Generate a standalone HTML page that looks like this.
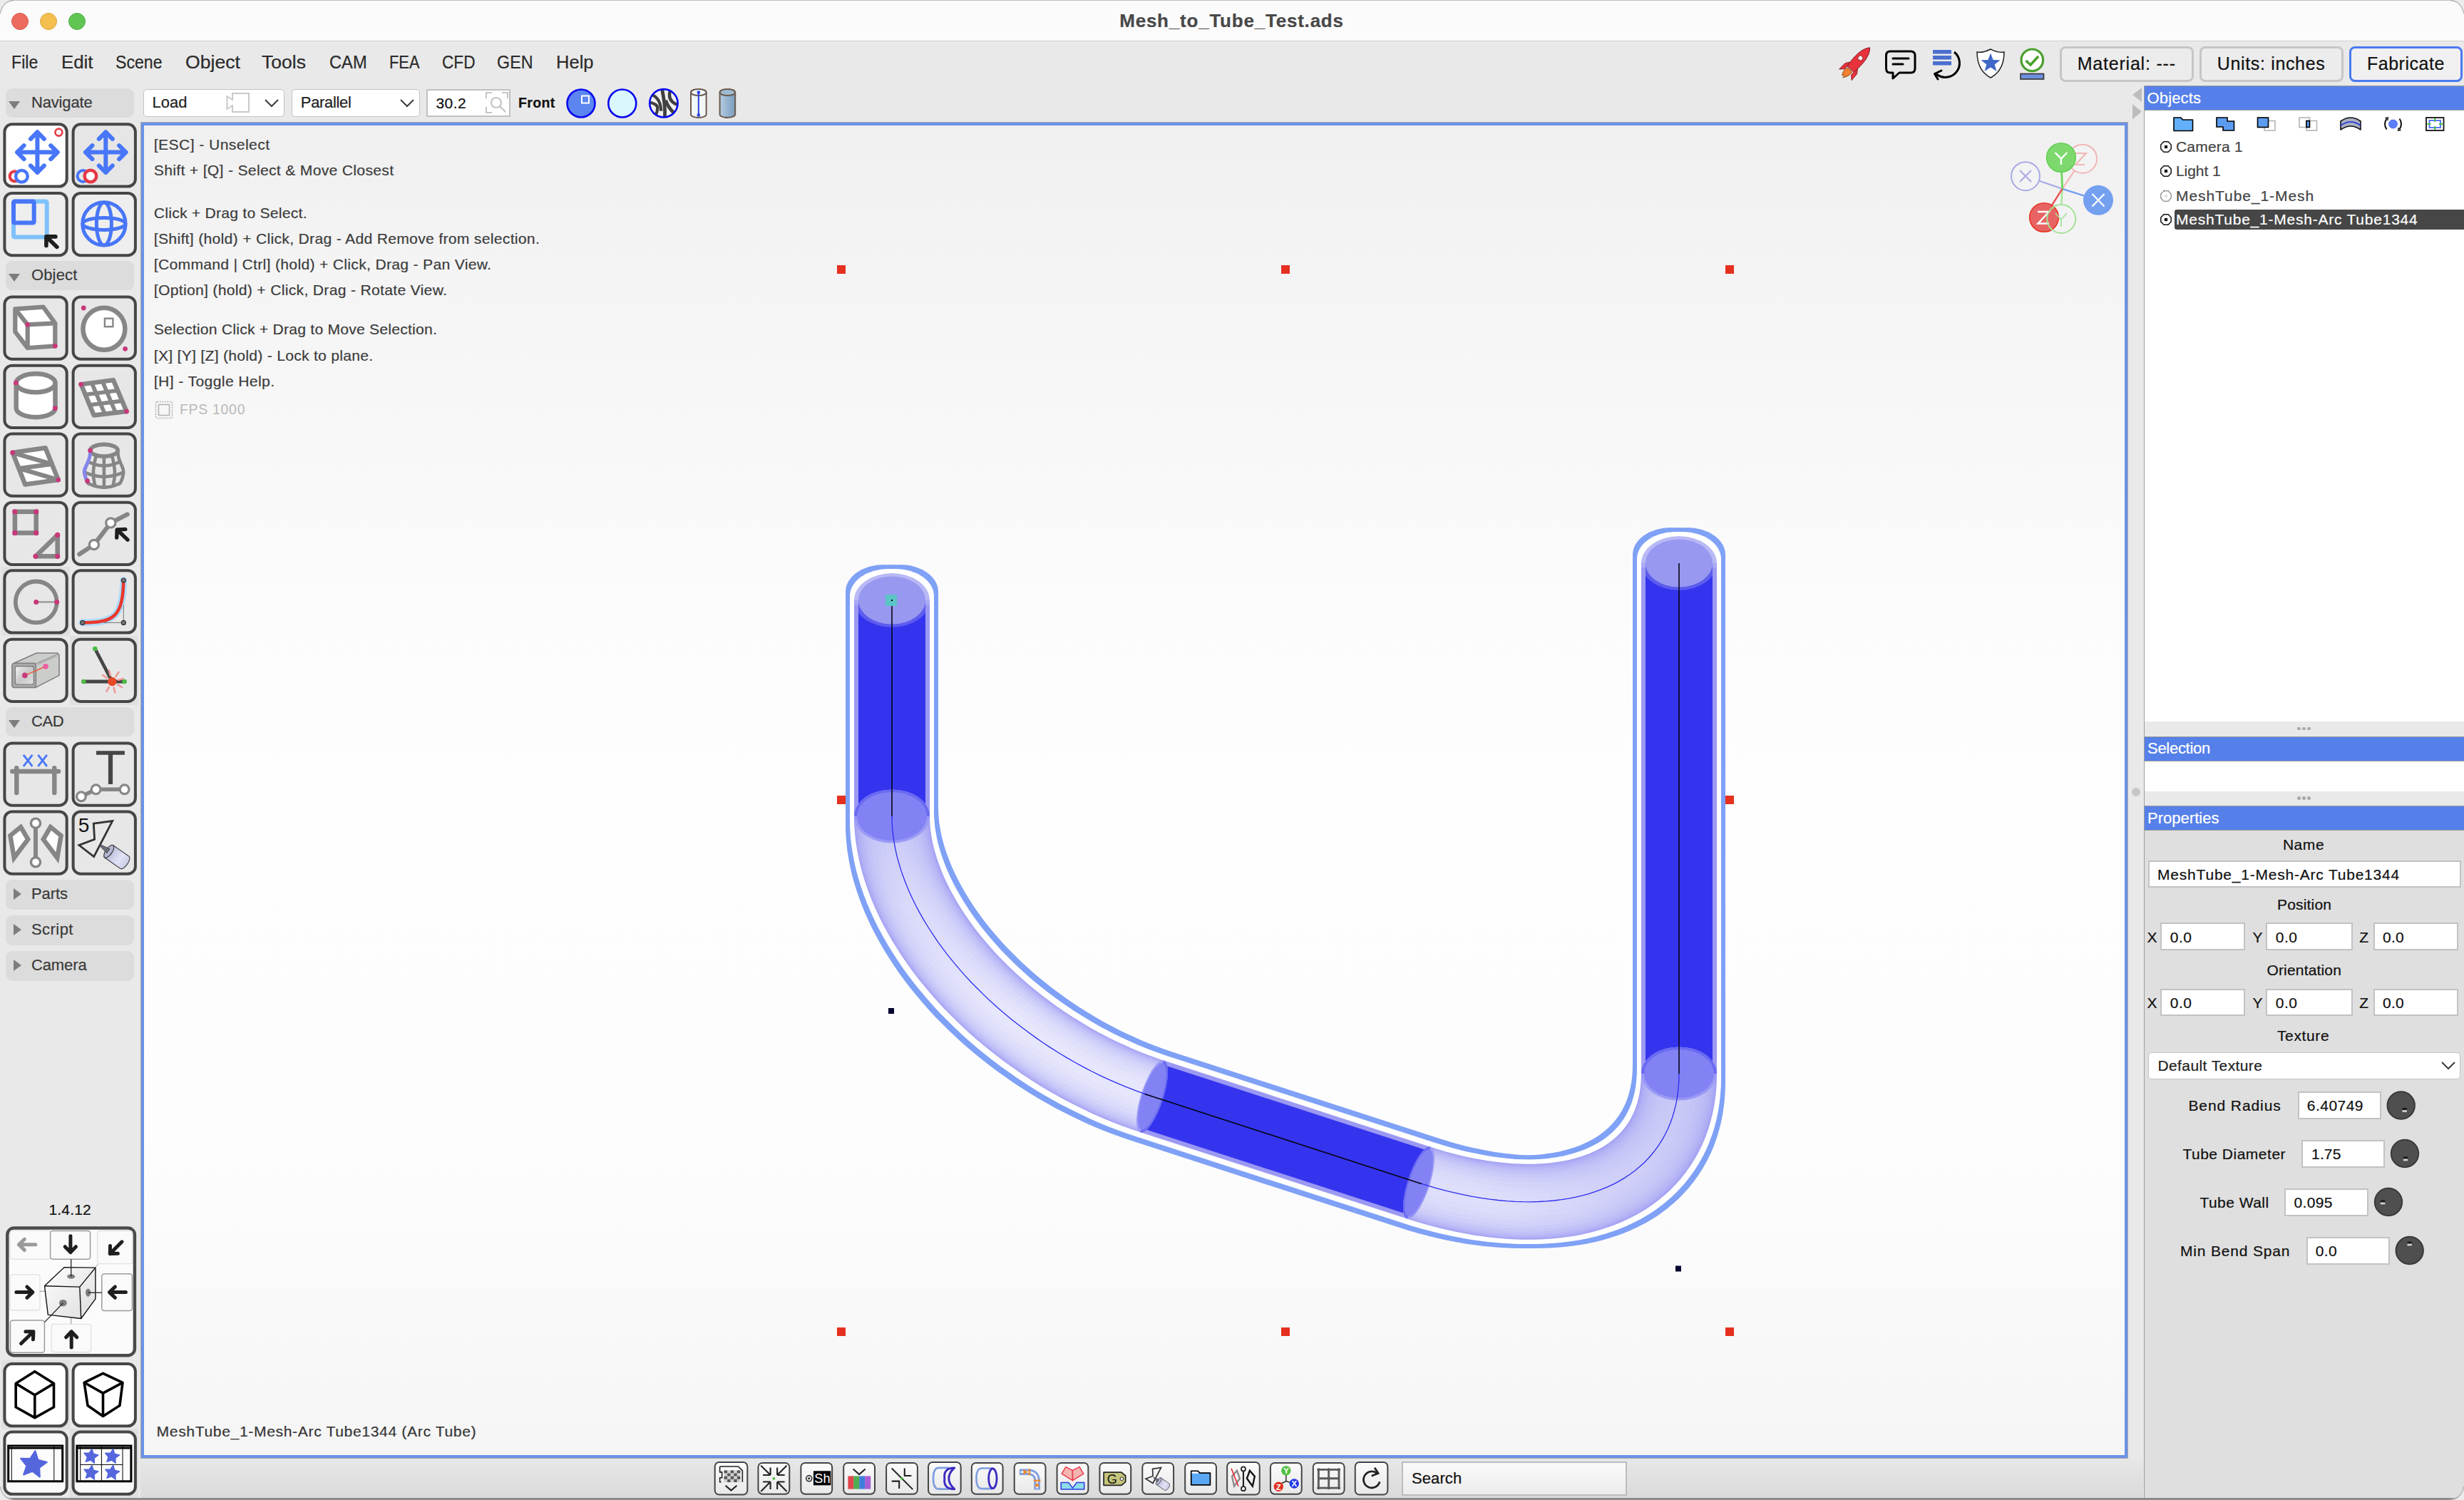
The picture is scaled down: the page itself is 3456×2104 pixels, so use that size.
<!DOCTYPE html>
<html><head><meta charset="utf-8"><title>Mesh_to_Tube_Test.ads</title>
<style>

html,body{margin:0;padding:0;}
body{width:3456px;height:2104px;position:relative;overflow:hidden;background:#e9e9e9;
 font-family:"Liberation Sans",sans-serif;color:#000;}
.abs{position:absolute;}
div,span,svg{position:absolute;box-sizing:border-box;}
.t{white-space:nowrap;line-height:1;-webkit-text-stroke:0.22px currentColor;}
#titlebar{left:0;top:0;width:3456px;height:58px;background:#fbfbfb;border-bottom:1.5px solid #cfcfcf;}
#title{left:0;width:3456px;top:15px;text-align:center;font-weight:bold;font-size:26px;color:#484848;}
.tl{width:24px;height:24px;border-radius:12px;top:17.5px;}
.menu{top:74px;font-size:25px;color:#2b2b2b;transform-origin:0 0;}
.hdr{left:8px;width:180px;height:41px;background:#dcdcdc;border-radius:9px;}
.hdr .t{left:36px;top:9px;font-size:22px;color:#3a3a3a;}
.tb{width:91px;height:91px;border:4px solid #464646;border-radius:13px;background:#e7e7e7;}
.tb svg{left:-4px;top:-4px;width:91px;height:91px;overflow:visible;}
.field{background:#fff;border:1.5px solid #c2c2c2;}
.combo{background:#fff;border:1.5px solid #c4c4c4;border-radius:5px;}
.phdr{left:3008px;width:448px;height:35px;background:#5680e9;border-top:1.5px solid #9a9a9a;border-bottom:1.5px solid #9a9a9a;}
.phdr .t{left:5px;top:5px;font-size:22px;color:#fff;}
.lbl{font-size:21px;color:#111;}
.tree{font-size:21px;color:#444;}
.bb{width:47px;height:47px;border:2px solid #4a4a4a;border-radius:7px;background:#f6f6f6;top:2050px;}
.bb svg{left:-2.5px;top:-2.5px;width:48px;height:48px;overflow:visible;}

</style></head>
<body>
<div id="titlebar"></div>
<div style="left:0;top:0;width:3456px;height:1px;background:#bdbdbd"></div>
<span class="t" style="left:1570.2px;top:15.5px;font-size:26px;color:#484848;letter-spacing:0.785px;font-weight:bold;">Mesh_to_Tube_Test.ads</span>
<div class="tl" style="left:16px;background:#ec6a5e;border:1px solid #d9574b"></div>
<div class="tl" style="left:56px;background:#f4bf4f;border:1px solid #dca83d"></div>
<div class="tl" style="left:96px;background:#61c554;border:1px solid #4fb043"></div>
<span class="t" style="left:15.8px;top:74.8px;font-size:25px;color:#2b2b2b;transform:scaleX(0.9260);transform-origin:0 0;">File</span>
<span class="t" style="left:86.2px;top:74.8px;font-size:25px;color:#2b2b2b;transform:scaleX(1.0330);transform-origin:0 0;">Edit</span>
<span class="t" style="left:161.7px;top:74.8px;font-size:25px;color:#2b2b2b;transform:scaleX(0.9241);transform-origin:0 0;">Scene</span>
<span class="t" style="left:259.8px;top:74.8px;font-size:25px;color:#2b2b2b;transform:scaleX(1.0657);transform-origin:0 0;">Object</span>
<span class="t" style="left:367.2px;top:74.8px;font-size:25px;color:#2b2b2b;transform:scaleX(1.0624);transform-origin:0 0;">Tools</span>
<span class="t" style="left:461.9px;top:74.8px;font-size:25px;color:#2b2b2b;transform:scaleX(0.9468);transform-origin:0 0;">CAM</span>
<span class="t" style="left:546.2px;top:74.8px;font-size:25px;color:#2b2b2b;transform:scaleX(0.8741);transform-origin:0 0;">FEA</span>
<span class="t" style="left:619.8px;top:74.8px;font-size:25px;color:#2b2b2b;transform:scaleX(0.9050);transform-origin:0 0;">CFD</span>
<span class="t" style="left:697.2px;top:74.8px;font-size:25px;color:#2b2b2b;transform:scaleX(0.9322);transform-origin:0 0;">GEN</span>
<span class="t" style="left:780.2px;top:74.8px;font-size:25px;color:#2b2b2b;transform:scaleX(1.0211);transform-origin:0 0;">Help</span>
<div class="combo" style="left:201px;top:124.5px;width:198px;height:39px"></div>
<span class="t" style="left:213.6px;top:133.3px;font-size:22px;color:#222;letter-spacing:-0.054px;">Load</span>
<svg style="left:316px;top:128px;width:36px;height:32px" viewBox="0 0 36 32"><path d="M10 3H33V29H10V20L2.5 25V7L10 12Z" fill="none" stroke="#c9c9c9" stroke-width="2"/></svg>
<svg style="left:369px;top:137px;width:24px;height:16px" viewBox="0 0 24 16"><path d="M3 3L12 12L21 3" fill="none" stroke="#3c3c3c" stroke-width="2"/></svg>
<div class="combo" style="left:409px;top:124.5px;width:180px;height:39px"></div>
<span class="t" style="left:421.8px;top:133.3px;font-size:22px;color:#222;letter-spacing:-0.343px;">Parallel</span>
<svg style="left:559px;top:137px;width:24px;height:16px" viewBox="0 0 24 16"><path d="M3 3L12 12L21 3" fill="none" stroke="#3c3c3c" stroke-width="2"/></svg>
<div class="field" style="left:598px;top:124.5px;width:118px;height:39px;border-width:2px;border-color:#c0c0c0"></div>
<span class="t" style="left:611.4px;top:133.8px;font-size:21px;color:#111;letter-spacing:0.498px;">30.2</span>
<svg style="left:679px;top:127px;width:36px;height:34px" viewBox="0 0 36 34"><path d="M3 11V3H11M25 3H33V11M3 23V31H11" fill="none" stroke="#c4c4c4" stroke-width="2"/><circle cx="17" cy="17" r="7" fill="none" stroke="#c4c4c4" stroke-width="2.2"/><path d="M22 22L30 30" stroke="#c4c4c4" stroke-width="2.4"/></svg>
<span class="t" style="left:726.9px;top:135.2px;font-size:19.5px;color:#111;letter-spacing:0.371px;font-weight:bold;">Front</span>
<svg style="left:790px;top:120px;width:250px;height:50px" viewBox="790 120 250 50"><defs><clipPath id="cpz"><circle cx="930.9" cy="144.8" r="19.5"/></clipPath><linearGradient id="gcy" x1="0" x2="1" y1="0" y2="0"><stop offset="0" stop-color="#b8cde0"/><stop offset="0.6" stop-color="#8fb0cd"/><stop offset="1" stop-color="#7c9cbc"/></linearGradient></defs><circle cx="815" cy="145" r="19.5" fill="#5c85f0" stroke="#0808ee" stroke-width="2.6"/><rect x="816" y="134.5" width="10" height="10" fill="#5c85f0" stroke="#fff" stroke-width="2"/><circle cx="872.8" cy="145" r="19.5" fill="#daf7fd" stroke="#0808ee" stroke-width="2.6"/><circle cx="930.9" cy="144.8" r="19.7" fill="#f0f0f0"/><g clip-path="url(#cpz)" fill="none" stroke="#404040"><path d="M928.9 126.1 C930.3 136.3 933.6 147.2 932.4 163.9" stroke-width="4.8"/><path d="M933.6 140.7 C936.4 148.8 939.7 152.9 944.5 157.8" stroke-width="4.8"/><path d="M915.3 133.4 C923.4 137.1 926.7 144.0 927.3 155.7" stroke-width="4.2"/><path d="M912.1 143.8 C919.8 146.0 923.0 148.0 922.2 153.7 C921.8 156.6 921.0 159.0 919.4 161.4" stroke-width="4.2"/><path d="M939.7 127.7 C937.6 136.3 940.1 143.2 949.8 146.6" stroke-width="4.4"/></g><circle cx="930.9" cy="144.8" r="19.7" fill="none" stroke="#0808ee" stroke-width="2.6"/><path d="M969 129.500V160.500A10.8 4.5 0 0 0 990.6 160.500V129.500" fill="#f1f8f5" stroke="#6b5a4e" stroke-width="2"/><ellipse cx="979.8" cy="129.500" rx="10.8" ry="4.6" fill="#f1f8f5" stroke="#6b5a4e" stroke-width="2"/><path d="M979.8 129.500V161.500" stroke="#2a3fe0" stroke-width="2"/><rect x="977.8" y="127.500" width="4" height="4" fill="#2a3fe0"/><rect x="977.8" y="159.500" width="4" height="4" fill="#2a3fe0"/><path d="M1009.6 129.500V160.500A10.8 4.5 0 0 0 1031.2 160.500V129.500" fill="url(#gcy)" stroke="#6b5a4e" stroke-width="2"/><ellipse cx="1020.4" cy="129.500" rx="10.8" ry="4.6" fill="#9fbbd4" stroke="#6b5a4e" stroke-width="2"/></svg>
<svg style="left:2570px;top:60px;width:310px;height:60px" viewBox="2570 60 310 60"><g transform="translate(2604 87.500) rotate(42) scale(0.9)"><path d="M-7 20L-13 26L-12.500 13L-7 5Z" fill="#e8323c" stroke="#7a1a20" stroke-width="0.9"/><path d="M7 20L13 26L12.500 13L7 5Z" fill="#e8323c" stroke="#7a1a20" stroke-width="0.9"/><path d="M0 -31C8.500 -22 9.500 -6 7 14H-7C-9.500 -6 -8.500 -22 0 -31Z" fill="#e8323c" stroke="#7a1a20" stroke-width="1"/><circle cx="0" cy="-9" r="3.800" fill="#f3f3f3" stroke="#7a1a20" stroke-width="0.9"/><path d="M-4.500 15.500C-8 21 -5.500 25 -3.500 30C-1.500 27 -0.500 27 0 32C3.500 27 6.500 21 4.500 15.500Z" fill="#f08030" stroke="#8a3a10" stroke-width="0.9"/></g><path d="M2651 72H2680Q2686 72 2686 78V96Q2686 102 2680 102H2664L2655 110V102H2651Q2645.500 102 2645.500 96V78Q2645.500 72 2651 72Z" fill="none" stroke="#000" stroke-width="3" stroke-linejoin="round"/><path d="M2655 82H2677M2655 90H2669" stroke="#000" stroke-width="3" stroke-linecap="round"/><rect x="2711" y="70" width="26" height="5.5" fill="#4a6fd0"/><rect x="2711" y="78" width="26" height="5.5" fill="#4a6fd0"/><rect x="2711" y="86" width="26" height="5.5" fill="#4a6fd0"/><path d="M2741 73A18 18 0 1 1 2716 104" fill="none" stroke="#000" stroke-width="3"/><path d="M2723 99L2713.500 103.500L2718 111" fill="none" stroke="#000" stroke-width="3" stroke-linecap="round" stroke-linejoin="round"/><path d="M2792 69C2784 73 2778 74 2773 73C2773 90 2779 102 2792 109C2805 102 2811 90 2811 73C2806 74 2800 73 2792 69Z" fill="#fff" stroke="#222" stroke-width="1.5"/><path d="M2792 74.500L2795.600 84L2805.500 84.300L2797.700 90.500L2800.500 100L2792 94.500L2783.500 100L2786.300 90.500L2778.500 84.300L2788.400 84Z" fill="#4068c8"/><circle cx="2850.3" cy="84.3" r="15.3" fill="#fff" stroke="#4aa02c" stroke-width="3.2"/><path d="M2841.500 85L2848 91L2859 79" fill="none" stroke="#4aa02c" stroke-width="3.6"/><rect x="2834" y="103.500" width="32.500" height="7.500" fill="#6d8fdc" stroke="#333" stroke-width="1.6"/></svg>
<div style="left:2889px;top:65px;width:188px;height:50px;border:3px solid #c6c6c6;border-radius:8px;background:#ececec"></div>
<span class="t" style="left:2913.7px;top:77.0px;font-size:25px;color:#111;letter-spacing:0.794px;">Material: ---</span>
<div style="left:3085px;top:65px;width:202px;height:50px;border:3px solid #c6c6c6;border-radius:8px;background:#ececec"></div>
<span class="t" style="left:3109.7px;top:77.0px;font-size:25px;color:#111;letter-spacing:0.661px;">Units: inches</span>
<div style="left:3295px;top:65px;width:159px;height:50px;border:3px solid #4a7af0;border-radius:8px;background:#f0f0f0"></div>
<span class="t" style="left:3319.9px;top:77.0px;font-size:25px;color:#111;letter-spacing:0.533px;">Fabricate</span>
<div style="left:2px;top:795px;width:96px;height:97px;background:#e0e0e0"></div>
<div style="left:98px;top:892px;width:96px;height:97px;background:#e0e0e0"></div>
<div class="hdr" style="top:124.0px;height:41px"><svg style="left:3px;top:16px;width:18px;height:14px" viewBox="0 0 18 14"><path d="M1 2H17L9 13Z" fill="#7d7d7d"/></svg></div><span class="t" style="left:43.9px;top:133.3px;font-size:22px;color:#3a3a3a;letter-spacing:-0.138px;">Navigate</span>
<svg style="left:4px;top:172px;width:94px;height:94px" viewBox="0 0 94 94"><g transform="translate(0.40 0.30)"><rect x="2" y="2" width="87.3" height="87.3" rx="10.5" fill="#ffffff" stroke="#464646" stroke-width="4"/><path d="M48.0 13.0V69.6M19.7 41.3H76.3M38.5 22.5L48.0 13.0L57.5 22.5M38.5 60.1L48.0 69.6L57.5 60.1M29.2 31.8L19.7 41.3L29.2 50.8M66.8 31.8L76.3 41.3L66.8 50.8" fill="none" stroke="#4876f8" stroke-width="6" stroke-linecap="round" stroke-linejoin="round"/><circle cx="78" cy="13.3" r="5" fill="#fff" stroke="#e63946" stroke-width="2.6"/><circle cx="16.3" cy="75" r="7" fill="#fff" stroke="#e63946" stroke-width="4.2"/><circle cx="26" cy="75" r="8.3" fill="#fff" stroke="#4876f8" stroke-width="4.5"/></g></svg>
<svg style="left:100px;top:172px;width:94px;height:94px" viewBox="0 0 94 94"><g transform="translate(0.60 0.30)"><rect x="2" y="2" width="87.3" height="87.3" rx="10.5" fill="#e6e6e6" stroke="#464646" stroke-width="4"/><path d="M47.7 13.0V69.6M19.4 41.3H76.0M38.2 22.5L47.7 13.0L57.2 22.5M38.2 60.1L47.7 69.6L57.2 60.1M28.9 31.8L19.4 41.3L28.9 50.8M66.5 31.8L76.0 41.3L66.5 50.8" fill="none" stroke="#4876f8" stroke-width="6" stroke-linecap="round" stroke-linejoin="round"/><circle cx="16" cy="74.7" r="8" fill="#e6e6e6" stroke="#4876f8" stroke-width="4"/><circle cx="26.3" cy="74.7" r="8.3" fill="#fff" stroke="#e63946" stroke-width="4.5"/></g></svg>
<svg style="left:4px;top:268px;width:94px;height:94px" viewBox="0 0 94 94"><g transform="translate(0.40 0.90)"><rect x="2" y="2" width="87.3" height="87.3" rx="10.5" fill="#eeeeee" stroke="#464646" stroke-width="4"/><rect x="14.6" y="13.7" width="46.7" height="50" rx="1.5" fill="none" stroke="#7fc1fb" stroke-width="6"/><rect x="14.6" y="13.7" width="28.7" height="30" rx="1.5" fill="none" stroke="#4876f8" stroke-width="6"/><path d="M75.500 77.500L61 63.500M73.500 63H60.500V75.500" fill="none" stroke="#1e1e1e" stroke-width="5.6" stroke-linecap="round" stroke-linejoin="round"/></g></svg>
<svg style="left:100px;top:268px;width:94px;height:94px" viewBox="0 0 94 94"><g transform="translate(0.60 0.90)"><rect x="2" y="2" width="87.3" height="87.3" rx="10.5" fill="#eeeeee" stroke="#464646" stroke-width="4"/><g fill="none" stroke="#4876f8" stroke-width="5"><circle cx="45.3" cy="45" r="30.2"/><ellipse cx="45.3" cy="45" rx="10.5" ry="30"/><ellipse cx="45.3" cy="45" rx="30" ry="8.5"/></g></g></svg>
<div class="hdr" style="top:366.0px;height:41px"><svg style="left:3px;top:16px;width:18px;height:14px" viewBox="0 0 18 14"><path d="M1 2H17L9 13Z" fill="#7d7d7d"/></svg></div><span class="t" style="left:43.9px;top:375.3px;font-size:22px;color:#3a3a3a;letter-spacing:0.190px;">Object</span>
<svg style="left:4px;top:414px;width:94px;height:94px" viewBox="0 0 94 94"><g transform="translate(0.40 0.40)"><rect x="2" y="2" width="87.3" height="87.3" rx="10.5" fill="#e7e7e7" stroke="#464646" stroke-width="4"/><g fill="#fff" stroke="#868686" stroke-width="6.2" stroke-linejoin="round"><path d="M16.9 18.9L56.3 16.3L72.9 38.9L72.9 70.9L34.3 73.6L16.9 50.9Z"/><path d="M16.9 18.9L34.3 40.9L72.9 38.9" fill="none"/><path d="M34.3 40.9L34.3 73.6" fill="none"/></g><circle cx="34.3" cy="40.9" r="3.4" fill="#c8387a"/><circle cx="72.9" cy="70.9" r="3.4" fill="#c8387a"/></g></svg>
<svg style="left:100px;top:414px;width:94px;height:94px" viewBox="0 0 94 94"><g transform="translate(0.60 0.40)"><rect x="2" y="2" width="87.3" height="87.3" rx="10.5" fill="#e7e7e7" stroke="#464646" stroke-width="4"/><circle cx="45.3" cy="46.9" r="29.5" fill="#fff" stroke="#868686" stroke-width="6.5"/><rect x="46.3" y="32.3" width="11.5" height="11.5" fill="#fff" stroke="#868686" stroke-width="2.4"/><circle cx="16.6" cy="17.6" r="3.4" fill="#c8387a"/><circle cx="75.0" cy="74.9" r="3.4" fill="#c8387a"/></g></svg>
<svg style="left:4px;top:510px;width:94px;height:94px" viewBox="0 0 94 94"><g transform="translate(0.40 0.70)"><rect x="2" y="2" width="87.3" height="87.3" rx="10.5" fill="#e7e7e7" stroke="#464646" stroke-width="4"/><g fill="#fff" stroke="#868686" stroke-width="6.5"><path d="M18.3 26.6V61.5A27.4 13 0 0 0 73.100 61.500V26.600"/><ellipse cx="45.7" cy="26.6" rx="27.4" ry="13"/></g><circle cx="18.0" cy="26.2" r="3.4" fill="#c8387a"/><circle cx="72.9" cy="62.0" r="3.4" fill="#c8387a"/></g></svg>
<svg style="left:100px;top:510px;width:94px;height:94px" viewBox="0 0 94 94"><g transform="translate(0.60 0.70)"><rect x="2" y="2" width="87.3" height="87.3" rx="10.5" fill="#e7e7e7" stroke="#464646" stroke-width="4"/><path d="M13.1 28.4L58.3 22.4L76.9 66.4L31.1 71.7Z" fill="#fff" stroke="#868686" stroke-width="6.5" stroke-linejoin="round"/><path d="M28.1 26.4L46.4 70.0M19.1 42.8L64.5 37.1M43.2 24.4L61.6 68.2M25.1 57.3L70.7 51.7" fill="none" stroke="#868686" stroke-width="5.6"/><circle cx="13.1" cy="28.4" r="3.4" fill="#c8387a"/><circle cx="76.9" cy="66.4" r="3.4" fill="#c8387a"/></g></svg>
<svg style="left:4px;top:606px;width:94px;height:94px" viewBox="0 0 94 94"><g transform="translate(0.40 0.40)"><rect x="2" y="2" width="87.3" height="87.3" rx="10.5" fill="#e7e7e7" stroke="#464646" stroke-width="4"/><path d="M13.3 28.5L59.3 21.9L77.3 66.7L30.8 73.1Z" fill="#fff" stroke="#868686" stroke-width="6.5" stroke-linejoin="round"/><path d="M13.3 28.5L68.4 44.5L22.3 50.7L77.3 66.7" fill="none" stroke="#868686" stroke-width="6.2" stroke-linejoin="round"/><circle cx="13.3" cy="28.5" r="3.4" fill="#c8387a"/><circle cx="77.3" cy="66.7" r="3.4" fill="#c8387a"/></g></svg>
<svg style="left:100px;top:606px;width:94px;height:94px" viewBox="0 0 94 94"><g transform="translate(0.60 0.40)"><rect x="2" y="2" width="87.3" height="87.3" rx="10.5" fill="#e7e7e7" stroke="#464646" stroke-width="4"/><g fill="none" stroke="#868686" stroke-width="4.6" stroke-linecap="round"><path d="M26.0 26.3C26.7 42.9 15.3 48.3 18.7 60.3C20.0 65.6 20.7 69.6 24.0 72.3"/><path d="M64.7 26.3C64.0 42.9 75.3 48.3 72.0 60.3C70.7 65.6 70.0 69.6 66.7 72.3"/><ellipse cx="45.3" cy="25.3" rx="19.3" ry="8.3" stroke-width="5.6"/><path d="M23.3 71.6Q45.3 82.9 67.3 71.6"/><path d="M24.0 41.6Q45.3 52.3 66.7 41.6"/><path d="M18.4 56.3Q45.3 68.3 72.3 56.3"/><path d="M34.0 33.6Q27.3 54.9 32.7 74.9"/><path d="M45.3 34.9V77.3"/><path d="M56.7 33.6Q63.3 54.9 58.0 74.9"/></g><path d="M26.0 26.3C26.7 42.9 15.3 48.3 18.0 58.9C19.3 62.9 20.0 66.3 22.0 68.3" fill="none" stroke="#8686ee" stroke-width="4.8"/><circle cx="26.0" cy="25.6" r="3.4" fill="#c8387a"/><circle cx="22.0" cy="68.3" r="3.4" fill="#c8387a"/></g></svg>
<svg style="left:4px;top:702px;width:94px;height:94px" viewBox="0 0 94 94"><g transform="translate(0.40 0.70)"><rect x="2" y="2" width="87.3" height="87.3" rx="10.5" fill="#e7e7e7" stroke="#464646" stroke-width="4"/><path d="M16.5 15.1L46.3 15.1L46.3 44.7L16.5 44.7Z" fill="none" stroke="#868686" stroke-width="6.5"/><path d="M76.3 47.7L76.3 77.6L45.6 77.6Z" fill="none" stroke="#868686" stroke-width="6.5" stroke-linejoin="round"/><circle cx="16.5" cy="15.1" r="3.6" fill="#c8387a"/><circle cx="46.3" cy="15.1" r="3.6" fill="#c8387a"/><circle cx="46.3" cy="44.7" r="3.6" fill="#c8387a"/><circle cx="16.5" cy="44.7" r="3.6" fill="#c8387a"/><circle cx="76.3" cy="47.7" r="3.6" fill="#c8387a"/><circle cx="76.3" cy="77.6" r="3.6" fill="#c8387a"/><circle cx="45.6" cy="77.6" r="3.6" fill="#c8387a"/></g></svg>
<svg style="left:100px;top:702px;width:94px;height:94px" viewBox="0 0 94 94"><g transform="translate(0.60 0.70)"><rect x="2" y="2" width="87.3" height="87.3" rx="10.5" fill="#e7e7e7" stroke="#464646" stroke-width="4"/><path d="M10.7 74.7L31.3 61.3L54.7 30.7L78.0 18.9" fill="none" stroke="#868686" stroke-width="6.2" stroke-linecap="round" stroke-linejoin="round"/><circle cx="31.3" cy="61.3" r="6.6" fill="#fff" stroke="#868686" stroke-width="3.2"/><circle cx="54.7" cy="30.7" r="6.6" fill="#fff" stroke="#868686" stroke-width="3.2"/><path d="M78.4 54.4L63.6 40.3M75.3 39.7L63.6 40.3L63.1 51.3" fill="none" stroke="#1e1e1e" stroke-width="5.4" stroke-linecap="round" stroke-linejoin="round"/></g></svg>
<svg style="left:4px;top:798px;width:94px;height:94px" viewBox="0 0 94 94"><g transform="translate(0.40 0.30)"><rect x="2" y="2" width="87.3" height="87.3" rx="10.5" fill="#e7e7e7" stroke="#464646" stroke-width="4"/><circle cx="46.3" cy="46.1" r="28.9" fill="none" stroke="#868686" stroke-width="5.8"/><path d="M46.300 46.100H75.300" stroke="#9a9a9a" stroke-width="2.4"/><circle cx="46.3" cy="46.1" r="3.5" fill="#c8387a"/><circle cx="75.3" cy="46.1" r="3.5" fill="#c8387a"/></g></svg>
<svg style="left:100px;top:798px;width:94px;height:94px" viewBox="0 0 94 94"><g transform="translate(0.60 0.30)"><rect x="2" y="2" width="87.3" height="87.3" rx="10.5" fill="#e7e7e7" stroke="#464646" stroke-width="4"/><path d="M15.1 75.1C59.1 75.1 71.7 67.1 72.7 15.7" fill="none" stroke="#aedcfc" stroke-width="10" stroke-linecap="round"/><path d="M45.1 75.1L72.7 75.1L72.7 50.1" fill="none" stroke="#555" stroke-width="0.8"/><path d="M15.1 75.1C59.1 75.1 71.7 67.1 72.7 15.7" fill="none" stroke="#e8382d" stroke-width="4.6"/><circle cx="15.1" cy="75.1" r="3" fill="#777" stroke="#333" stroke-width="1.2"/><circle cx="72.7" cy="15.7" r="3" fill="#777" stroke="#333" stroke-width="1.2"/><circle cx="72.7" cy="75.1" r="3" fill="#777" stroke="#333" stroke-width="1.2"/></g></svg>
<svg style="left:4px;top:894px;width:94px;height:94px" viewBox="0 0 94 94"><g transform="translate(0.40 0.70)"><rect x="2" y="2" width="87.3" height="87.3" rx="10.5" fill="#e7e7e7" stroke="#464646" stroke-width="4"/><defs><linearGradient id="gsq" x1="0" y1="0" x2="1" y2="1"><stop offset="0" stop-color="#f2f2f2"/><stop offset="0.5" stop-color="#c8c8c8"/><stop offset="1" stop-color="#e2e2e2"/></linearGradient></defs><path d="M12.7 38.7L15.6 35.3L46.9 21.3L76.3 21.3L78.5 24.0L78.5 52.7L45.6 69.7L15.6 69.7L12.7 67.3Z" fill="#cbcdcb" stroke="#7f7f7f" stroke-width="1.6" stroke-linejoin="round"/><path d="M46.3 36.0L76.9 22.7" fill="none" stroke="#8a8a8a" stroke-width="1"/><path d="M48.3 37.3L75.6 25.3" fill="none" stroke="#8a8a8a" stroke-width="0.8"/><rect x="12.7" y="35.6" width="33.3" height="34.1" rx="3" fill="#a9a9a9" stroke="#7f7f7f" stroke-width="1.4"/><rect x="16.9" y="40.0" width="26.0" height="25.3" rx="2.5" fill="url(#gsq)" stroke="#777" stroke-width="1.2"/><path d="M30.5 52.7L59.6 40.0" stroke="#ee5a3a" stroke-width="1.5"/><circle cx="30.5" cy="52.7" r="3.8" fill="#c8387a"/><circle cx="59.6" cy="40.0" r="3.8" fill="#ee5fa0"/></g></svg>
<svg style="left:100px;top:894px;width:94px;height:94px" viewBox="0 0 94 94"><g transform="translate(0.60 0.70)"><rect x="2" y="2" width="87.3" height="87.3" rx="10.5" fill="#e7e7e7" stroke="#464646" stroke-width="4"/><path d="M32.7 15.3L56.7 61.3M16.7 61.3L74.0 61.3" fill="none" stroke="#464646" stroke-width="4.8" stroke-linecap="round"/><path d="M61.8 54.0L65.8 48.2M65.4 59.0L72.1 57.2M64.5 65.8L70.5 69.3M59.0 70.0L60.8 76.8M52.2 69.1L48.7 75.2M49.3 56.2L43.6 52.2M54.3 52.6L52.5 45.9" stroke="#f09a9a" stroke-width="2.6" stroke-linecap="round"/><circle cx="56.7" cy="61.3" r="6.2" fill="#e84a27"/><circle cx="32.7" cy="15.3" r="3.3" fill="#4cb944"/><circle cx="16.7" cy="61.3" r="3.3" fill="#4cb944"/><circle cx="74.0" cy="61.3" r="3.3" fill="#4cb944"/></g></svg>
<div class="hdr" style="top:992.0px;height:41px"><svg style="left:3px;top:16px;width:18px;height:14px" viewBox="0 0 18 14"><path d="M1 2H17L9 13Z" fill="#7d7d7d"/></svg></div><span class="t" style="left:43.9px;top:1001.3px;font-size:22px;color:#3a3a3a;letter-spacing:-0.310px;">CAD</span>
<svg style="left:4px;top:1040px;width:94px;height:94px" viewBox="0 0 94 94"><g transform="translate(0.40 0.40)"><rect x="2" y="2" width="87.3" height="87.3" rx="10.5" fill="#e7e7e7" stroke="#464646" stroke-width="4"/><path d="M12.8 41.6L77.7 41.6M18.9 36.8L18.9 71.7M71.9 36.8L71.9 71.7" fill="none" stroke="#868686" stroke-width="6.4" stroke-linecap="round"/><path d="M28.500 18.500L41 34.500M41 18.500L28.500 34.500M49 18.500L61.500 34.500M61.500 18.500L49 34.500" stroke="#4876f8" stroke-width="2.8" fill="none"/></g></svg>
<svg style="left:100px;top:1040px;width:94px;height:94px" viewBox="0 0 94 94"><g transform="translate(0.60 0.40)"><rect x="2" y="2" width="87.3" height="87.3" rx="10.5" fill="#e7e7e7" stroke="#464646" stroke-width="4"/><path d="M34.4 12.9H74.3V18.4H57.5V59.6H51.3V18.4H34.4Z" fill="#464646"/><path d="M13.3 76.9L34.0 66.9L74.0 66.9" fill="none" stroke="#868686" stroke-width="5.6"/><circle cx="13.3" cy="76.9" r="6.4" fill="#fff" stroke="#868686" stroke-width="3.2"/><circle cx="34.0" cy="66.9" r="6.4" fill="#fff" stroke="#868686" stroke-width="3.2"/><circle cx="74.0" cy="66.9" r="6.4" fill="#fff" stroke="#868686" stroke-width="3.2"/></g></svg>
<svg style="left:4px;top:1136px;width:94px;height:94px" viewBox="0 0 94 94"><g transform="translate(0.40 0.40)"><rect x="2" y="2" width="87.3" height="87.3" rx="10.5" fill="#e7e7e7" stroke="#464646" stroke-width="4"/><path d="M45.6 18.3L45.6 72.9" stroke="#868686" stroke-width="6" fill="none"/><circle cx="45.6" cy="18.3" r="6.6" fill="#fff" stroke="#868686" stroke-width="3.4"/><circle cx="45.6" cy="72.9" r="6.6" fill="#fff" stroke="#868686" stroke-width="3.4"/><path d="M24.7 23.6L34.9 40.9L15.3 66.9L10.0 35.6Z" fill="#fff" stroke="#868686" stroke-width="6.4" stroke-linejoin="miter"/><path d="M66.5 23.6L56.3 40.9L75.9 66.9L81.2 35.6Z" fill="#fff" stroke="#868686" stroke-width="6.4" stroke-linejoin="miter"/></g></svg>
<svg style="left:100px;top:1136px;width:94px;height:94px" viewBox="0 0 94 94"><g transform="translate(0.60 0.40)"><rect x="2" y="2" width="87.3" height="87.3" rx="10.5" fill="#e7e7e7" stroke="#464646" stroke-width="4"/><defs><linearGradient id="g5a" x1="0" y1="0" x2="1" y2="0"><stop offset="0" stop-color="#b9bbd6"/><stop offset="0.6" stop-color="#e2e3f6"/><stop offset="1" stop-color="#c9cbe6"/></linearGradient></defs><text x="9.2" y="30.3" font-size="28" fill="#111" font-family="Liberation Sans">5</text><path d="M30.7 18.7L57.1 15.2L31.1 65.3L10.3 49.1L32.0 40.9Z" fill="none" stroke="#333" stroke-width="2.8" stroke-linejoin="miter"/><g transform="translate(63.6 65.9) rotate(35)"><path d="M-14 -10.500H13A4.500 10.500 0 0 1 13 10.500H-14Z" fill="url(#g5a)" stroke="#222" stroke-width="1"/><ellipse cx="-14" cy="0" rx="4.5" ry="10.5" fill="#b4b6d2" stroke="#222" stroke-width="1"/><path d="M-15 -3.500L-29 -1V1L-15 3.500Z" fill="#6a7280" stroke="#333" stroke-width="0.8"/></g></g></svg>
<div class="hdr" style="top:1234.0px;height:42px"><svg style="left:9px;top:11px;width:14px;height:18px" viewBox="0 0 14 18"><path d="M2 1V17L13 9Z" fill="#7d7d7d"/></svg></div><span class="t" style="left:43.9px;top:1243.3px;font-size:22px;color:#3a3a3a;letter-spacing:-0.065px;">Parts</span>
<div class="hdr" style="top:1284.0px;height:42px"><svg style="left:9px;top:11px;width:14px;height:18px" viewBox="0 0 14 18"><path d="M2 1V17L13 9Z" fill="#7d7d7d"/></svg></div><span class="t" style="left:43.9px;top:1293.3px;font-size:22px;color:#3a3a3a;letter-spacing:0.464px;">Script</span>
<div class="hdr" style="top:1334.0px;height:42px"><svg style="left:9px;top:11px;width:14px;height:18px" viewBox="0 0 14 18"><path d="M2 1V17L13 9Z" fill="#7d7d7d"/></svg></div><span class="t" style="left:43.9px;top:1343.3px;font-size:22px;color:#3a3a3a;letter-spacing:-0.087px;">Camera</span>
<span class="t" style="left:68.4px;top:1685.5px;font-size:21px;color:#111;letter-spacing:0.197px;">1.4.12</span>
<svg style="left:0;top:1715px;width:200px;height:195px" viewBox="0 1715 200 195"><defs><linearGradient id="gnc" x1="0" y1="0" x2="1" y2="1"><stop offset="0" stop-color="#fdfdfd"/><stop offset="1" stop-color="#dedede"/></linearGradient></defs><rect x="10.300" y="1722.450" width="178.600" height="178.800" rx="9.500" fill="#fbfbfb" stroke="#4a4a4a" stroke-width="4.500"/><rect x="14.0" y="1725.9" width="56.6" height="40.4" rx="3.500" fill="#fafafa" stroke="#dcdcdc" stroke-width="1.1"/><rect x="70.6" y="1726.4" width="56.0" height="39.9" rx="3.500" fill="#fafafa" stroke="#9c9c9c" stroke-width="1.5"/><rect x="136.8" y="1726.4" width="49.0" height="46.3" rx="3.500" fill="#fafafa" stroke="#dcdcdc" stroke-width="1.1"/><rect x="14.0" y="1787.8" width="42.0" height="50.1" rx="3.500" fill="#fafafa" stroke="#dcdcdc" stroke-width="1.1"/><rect x="142.8" y="1786.7" width="42.6" height="51.7" rx="3.500" fill="#fafafa" stroke="#9c9c9c" stroke-width="1.5"/><rect x="14.5" y="1851.9" width="47.9" height="45.3" rx="3.500" fill="#fafafa" stroke="#9c9c9c" stroke-width="1.5"/><rect x="72.2" y="1857.3" width="55.5" height="39.3" rx="3.500" fill="#fafafa" stroke="#dcdcdc" stroke-width="1.1"/><path d="M56.0 1811.2L63.3 1811.2" stroke="#777" stroke-width="0.8"/><path d="M133.3 1778.1L137.4 1773.3" stroke="#777" stroke-width="0.8"/><path d="M99.7 1849.0L99.7 1857.3" stroke="#777" stroke-width="0.8"/><path d="M62.5 1803.7L90.2 1777.6L133.9 1778.1L133.9 1821.8L113.7 1849.5L67.3 1844.1Z" fill="url(#gnc)" stroke="#111" stroke-width="1.4" stroke-linejoin="round"/><path d="M62.5 1803.7L111.8 1805.1L133.9 1778.1M111.8 1805.1L113.7 1849.5" fill="none" stroke="#111" stroke-width="1.4"/><ellipse cx="99.7" cy="1790.5" rx="5.5" ry="3.2" fill="#7d7d7d"/><ellipse cx="123.6" cy="1813.1" rx="3.6" ry="5.6" fill="#7d7d7d"/><ellipse cx="88.4" cy="1827.7" rx="5.4" ry="4.8" fill="#7d7d7d"/><path d="M99.7 1766.3L99.7 1790.5" stroke="#222" stroke-width="1.3"/><path d="M123.6 1813.1L142.8 1813.1" stroke="#222" stroke-width="1.3"/><path d="M88.4 1827.7L62.5 1854.6" stroke="#222" stroke-width="1.3"/><path d="M49.8 1745.8L26.4 1745.8M34.3 1738.2L26.4 1745.8L34.3 1753.4" fill="none" stroke="#9a9a9a" stroke-width="5.0" stroke-linecap="round" stroke-linejoin="round"/><path d="M98.9 1733.7L98.9 1756.6M91.2 1748.7L98.9 1756.6L106.5 1748.7" fill="none" stroke="#1e1e1e" stroke-width="5.0" stroke-linecap="round" stroke-linejoin="round"/><path d="M171.0 1741.8L154.3 1758.5M154.5 1747.5L154.3 1758.5L165.3 1758.3" fill="none" stroke="#1e1e1e" stroke-width="5.0" stroke-linecap="round" stroke-linejoin="round"/><path d="M22.9 1812.6L45.8 1812.6M37.9 1820.2L45.8 1812.6L37.9 1805.0" fill="none" stroke="#1e1e1e" stroke-width="5.0" stroke-linecap="round" stroke-linejoin="round"/><path d="M176.4 1812.6L153.5 1812.6M161.4 1805.0L153.5 1812.6L161.4 1820.2" fill="none" stroke="#1e1e1e" stroke-width="5.0" stroke-linecap="round" stroke-linejoin="round"/><path d="M29.6 1884.5L46.9 1867.8M46.5 1878.8L46.9 1867.8L35.9 1867.8" fill="none" stroke="#1e1e1e" stroke-width="5.0" stroke-linecap="round" stroke-linejoin="round"/><path d="M100.2 1889.9L100.2 1867.8M107.8 1875.7L100.2 1867.8L92.6 1875.7" fill="none" stroke="#1e1e1e" stroke-width="5.0" stroke-linecap="round" stroke-linejoin="round"/></svg>
<div style="left:2px;top:1908px;width:96px;height:97px;background:#e0e0e0"></div>
<div style="left:98px;top:2004px;width:96px;height:97px;background:#e0e0e0"></div>
<svg style="left:4px;top:1911px;width:94px;height:94px" viewBox="0 0 94 94"><g transform="translate(0.40 0.00)"><rect x="2" y="2" width="87.3" height="87.3" rx="10.5" fill="#ffffff" stroke="#464646" stroke-width="4"/><path d="M44.4 12.7L71.1 29.6L71.1 62.8L44.4 77.6L17.8 62.8L17.8 29.6Z" fill="#fff" stroke="#000" stroke-width="3.6" stroke-linejoin="round"/><path d="M17.8 29.6L44.4 45.8L71.1 29.6M44.4 45.8L44.4 77.6" fill="none" stroke="#000" stroke-width="3.6" stroke-linejoin="round"/></g></svg>
<svg style="left:100px;top:1911px;width:94px;height:94px" viewBox="0 0 94 94"><g transform="translate(0.60 0.00)"><rect x="2" y="2" width="87.3" height="87.3" rx="10.5" fill="#ffffff" stroke="#464646" stroke-width="4"/><path d="M43.9 15.4L71.4 28.3L67.3 60.6L43.9 75.4L22.4 60.6L17.5 28.3Z" fill="#fff" stroke="#000" stroke-width="3.6" stroke-linejoin="round"/><path d="M17.5 28.3L43.9 43.1L71.4 28.3M43.9 43.1L43.9 75.4" fill="none" stroke="#000" stroke-width="3.6" stroke-linejoin="round"/></g></svg>
<svg style="left:4px;top:2006px;width:94px;height:94px" viewBox="0 0 94 94"><g transform="translate(0.40 0.50)"><rect x="2" y="2" width="87.3" height="87.3" rx="10.5" fill="#fafafa" stroke="#464646" stroke-width="4"/><rect x="7.3" y="21.5" width="76.0" height="49.8" fill="#fcfcfc" stroke="#000" stroke-width="3"/><path d="M7.3 24.7H83.2" stroke="#000" stroke-width="2.6"/><path d="M11.9 21.5V71.4M71.4 21.5V71.4" stroke="#000" stroke-width="1"/><path d="M42.3 28.4L47.9 40.3L60.8 41.9L51.3 50.9L53.8 63.7L42.3 57.4L30.8 63.7L33.3 50.9L23.7 41.9L36.7 40.3Z" fill="#5566dd" stroke="#5566dd" stroke-width="2" stroke-linejoin="round" transform="rotate(8 42.3 47.9)"/></g></svg>
<svg style="left:100px;top:2006px;width:94px;height:94px" viewBox="0 0 94 94"><g transform="translate(0.60 0.50)"><rect x="2" y="2" width="87.3" height="87.3" rx="10.5" fill="#fafafa" stroke="#464646" stroke-width="4"/><rect x="7.3" y="21.5" width="76.0" height="49.8" fill="#fcfcfc" stroke="#000" stroke-width="3"/><path d="M7.3 24.7H83.2" stroke="#000" stroke-width="2.6"/><path d="M12.1 21.5V71.4M71.4 21.5V71.4M41.8 21.5V71.4" stroke="#000" stroke-width="1"/><path d="M12.1 47.9H71.4" stroke="#000" stroke-width="1"/><path d="M26.9 25.9L30.0 32.2L36.9 33.1L31.9 38.0L33.1 44.9L26.9 41.6L20.8 44.9L22.0 38.0L16.9 33.1L23.9 32.2Z" fill="#5566dd" stroke="#5566dd" stroke-width="1.4" stroke-linejoin="round" transform="rotate(8 26.9 36.4)"/><path d="M56.6 25.9L59.6 32.2L66.6 33.1L61.5 38.0L62.7 44.9L56.6 41.6L50.4 44.9L51.6 38.0L46.6 33.1L53.5 32.2Z" fill="#5566dd" stroke="#5566dd" stroke-width="1.4" stroke-linejoin="round" transform="rotate(8 56.6 36.4)"/><path d="M26.9 48.8L30.0 55.1L36.9 56.0L31.9 60.9L33.1 67.8L26.9 64.5L20.8 67.8L22.0 60.9L16.9 56.0L23.9 55.1Z" fill="#5566dd" stroke="#5566dd" stroke-width="1.4" stroke-linejoin="round" transform="rotate(8 26.9 59.3)"/><path d="M56.6 48.8L59.6 55.1L66.6 56.0L61.5 60.9L62.7 67.8L56.6 64.5L50.4 67.8L51.6 60.9L46.6 56.0L53.5 55.1Z" fill="#5566dd" stroke="#5566dd" stroke-width="1.4" stroke-linejoin="round" transform="rotate(8 56.6 59.3)"/></g></svg>
<div style="left:197px;top:171px;width:2788px;height:1875px;background:#a9a9a9"></div>
<div style="left:198px;top:172px;width:2786px;height:1872.5px;border:4px solid #6b92e6;background:linear-gradient(180deg,#f0f0f0 0%,#f4f4f4 10.8%,#f8f8f8 24%,#fcfcfc 38%,#fefefe 50%,#fdfdfd 76%,#f9f9f9 90%,#f5f5f5 100%)"></div>
<span class="t" style="left:215.8px;top:191.9px;font-size:21px;color:#3a3a3a;letter-spacing:0.466px;-webkit-text-stroke:0;text-shadow:0.8px 0 0 rgba(80,80,80,0.30);">[ESC] - Unselect</span>
<span class="t" style="left:215.8px;top:227.9px;font-size:21px;color:#3a3a3a;letter-spacing:0.363px;-webkit-text-stroke:0;text-shadow:0.8px 0 0 rgba(80,80,80,0.30);">Shift + [Q] - Select &amp; Move Closest</span>
<span class="t" style="left:215.8px;top:287.8px;font-size:21px;color:#3a3a3a;letter-spacing:0.289px;-webkit-text-stroke:0;text-shadow:0.8px 0 0 rgba(80,80,80,0.30);">Click + Drag to Select.</span>
<span class="t" style="left:215.8px;top:323.8px;font-size:21px;color:#3a3a3a;letter-spacing:0.354px;-webkit-text-stroke:0;text-shadow:0.8px 0 0 rgba(80,80,80,0.30);">[Shift] (hold) + Click, Drag - Add Remove from selection.</span>
<span class="t" style="left:215.8px;top:359.8px;font-size:21px;color:#3a3a3a;letter-spacing:0.354px;-webkit-text-stroke:0;text-shadow:0.8px 0 0 rgba(80,80,80,0.30);">[Command | Ctrl] (hold) + Click, Drag - Pan View.</span>
<span class="t" style="left:215.8px;top:395.8px;font-size:21px;color:#3a3a3a;letter-spacing:0.353px;-webkit-text-stroke:0;text-shadow:0.8px 0 0 rgba(80,80,80,0.30);">[Option] (hold) + Click, Drag - Rotate View.</span>
<span class="t" style="left:215.8px;top:451.4px;font-size:21px;color:#3a3a3a;letter-spacing:0.281px;-webkit-text-stroke:0;text-shadow:0.8px 0 0 rgba(80,80,80,0.30);">Selection Click + Drag to Move Selection.</span>
<span class="t" style="left:215.8px;top:487.9px;font-size:21px;color:#3a3a3a;letter-spacing:0.318px;-webkit-text-stroke:0;text-shadow:0.8px 0 0 rgba(80,80,80,0.30);">[X] [Y] [Z] (hold) - Lock to plane.</span>
<span class="t" style="left:215.8px;top:523.9px;font-size:21px;color:#3a3a3a;letter-spacing:0.434px;-webkit-text-stroke:0;text-shadow:0.8px 0 0 rgba(80,80,80,0.30);">[H] - Toggle Help.</span>
<span class="t" style="left:251.9px;top:565.2px;font-size:19.5px;color:#b9b9b9;letter-spacing:0.694px;-webkit-text-stroke:0;">FPS 1000</span>
<svg style="left:215px;top:560px;width:30px;height:30px" viewBox="0 0 30 30"><rect x="3.500" y="3.500" width="23" height="23" rx="2" fill="none" stroke="#b4b4b4" stroke-width="1.6" stroke-dasharray="2 1.4"/><rect x="7.500" y="7.500" width="15" height="15" fill="none" stroke="#b4b4b4" stroke-width="1.6"/></svg>
<span class="t" style="left:219.6px;top:1997.3px;font-size:21px;color:#333;letter-spacing:0.691px;-webkit-text-stroke:0;text-shadow:0.8px 0 0 rgba(80,80,80,0.30);">MeshTube_1-Mesh-Arc Tube1344 (Arc Tube)</span>
<svg style="left:0;top:0;width:3456px;height:2104px" viewBox="0 0 3456 2104"><rect x="1174" y="372" width="12" height="12" fill="#e5301f"/><rect x="1797" y="372" width="12" height="12" fill="#e5301f"/><rect x="2420" y="372" width="12" height="12" fill="#e5301f"/><rect x="1174" y="1116" width="12" height="12" fill="#e5301f"/><rect x="2420" y="1116" width="12" height="12" fill="#e5301f"/><rect x="1174" y="1862" width="12" height="12" fill="#e5301f"/><rect x="1797" y="1862" width="12" height="12" fill="#e5301f"/><rect x="2420" y="1862" width="12" height="12" fill="#e5301f"/><rect x="1246" y="1414" width="8" height="8" fill="#00002e"/><rect x="2350" y="1775.500" width="8" height="8" fill="#00002e"/><defs><g id="sil"><path d="M1251.0 842.0L1251.0 1145.0L1251.2 1154.2L1251.8 1163.5L1252.8 1172.9L1254.3 1182.4L1256.1 1192.1L1258.3 1201.8L1261.0 1211.6L1264.0 1221.4L1267.5 1231.3L1271.3 1241.2L1275.5 1251.2L1280.1 1261.2L1285.1 1271.2L1290.4 1281.1L1296.1 1291.1L1302.2 1301.0L1308.6 1310.9L1315.3 1320.8L1322.4 1330.6L1329.8 1340.3L1337.6 1349.9L1345.6 1359.4L1354.0 1368.9L1362.6 1378.2L1371.6 1387.3L1380.8 1396.4L1390.2 1405.3L1399.9 1414.0L1409.9 1422.6L1420.1 1430.9L1430.5 1439.1L1441.1 1447.1L1451.9 1454.9L1462.8 1462.5L1474.0 1469.9L1485.3 1477.0L1496.7 1483.9L1508.3 1490.5L1520.0 1496.9L1531.8 1503.0L1543.6 1508.8L1555.6 1514.4L1567.6 1519.7L1579.7 1524.7L1591.8 1529.4L1603.9 1533.8L1616.0 1537.9L1990.0 1659.1L2002.7 1663.1L2015.4 1666.8L2028.0 1670.2L2040.6 1673.2L2053.0 1675.9L2065.3 1678.3L2077.5 1680.4L2089.5 1682.1L2101.4 1683.5L2113.1 1684.6L2124.7 1685.3L2136.1 1685.7L2147.3 1685.8L2158.3 1685.5L2169.1 1684.9L2179.7 1684.0L2190.0 1682.7L2200.1 1681.1L2210.0 1679.2L2219.6 1676.9L2228.9 1674.3L2237.9 1671.4L2246.7 1668.2L2255.2 1664.6L2263.3 1660.8L2271.2 1656.6L2278.8 1652.1L2286.0 1647.3L2292.9 1642.2L2299.4 1636.8L2305.7 1631.2L2311.5 1625.2L2317.0 1619.0L2322.2 1612.4L2327.0 1605.7L2331.4 1598.6L2335.5 1591.3L2339.2 1583.8L2342.5 1576.0L2345.4 1568.0L2347.9 1559.7L2350.1 1551.3L2351.9 1542.6L2353.2 1533.7L2354.2 1524.7L2354.8 1515.4L2355.0 1506.0L2355.0 790.0" fill="none" stroke-width="106" stroke-linejoin="round"/><ellipse cx="1251.0" cy="842.0" rx="53" ry="38" stroke="none"/><ellipse cx="2355.0" cy="790.0" rx="53" ry="38" stroke="none"/></g><linearGradient id="gshL" gradientUnits="userSpaceOnUse" x1="0" y1="1145" x2="0" y2="1420"><stop offset="0" stop-color="#9c9cf0" stop-opacity="0.42"/><stop offset="0.45" stop-color="#9c9cf0" stop-opacity="0.16"/><stop offset="1" stop-color="#9c9cf0" stop-opacity="0"/></linearGradient><linearGradient id="gshR" gradientUnits="userSpaceOnUse" x1="2355" y1="1506" x2="2120" y2="1720"><stop offset="0" stop-color="#9c9cf0" stop-opacity="0.42"/><stop offset="0.55" stop-color="#9c9cf0" stop-opacity="0.30"/><stop offset="1" stop-color="#9c9cf0" stop-opacity="0.10"/></linearGradient></defs><use href="#sil" transform="translate(-12 -12)" stroke="#7fa1f6" fill="#7fa1f6"/><use href="#sil" transform="translate(12 -12)" stroke="#7fa1f6" fill="#7fa1f6"/><use href="#sil" transform="translate(-12 12)" stroke="#7fa1f6" fill="#7fa1f6"/><use href="#sil" transform="translate(12 12)" stroke="#7fa1f6" fill="#7fa1f6"/><use href="#sil" transform="translate(0 -12)" stroke="#7fa1f6" fill="#7fa1f6"/><use href="#sil" transform="translate(0 12)" stroke="#7fa1f6" fill="#7fa1f6"/><use href="#sil" transform="translate(-12 0)" stroke="#7fa1f6" fill="#7fa1f6"/><use href="#sil" transform="translate(12 0)" stroke="#7fa1f6" fill="#7fa1f6"/><use href="#sil" transform="translate(-6 -6)" stroke="#ffffff" fill="#ffffff"/><use href="#sil" transform="translate(6 -6)" stroke="#ffffff" fill="#ffffff"/><use href="#sil" transform="translate(-6 6)" stroke="#ffffff" fill="#ffffff"/><use href="#sil" transform="translate(6 6)" stroke="#ffffff" fill="#ffffff"/><use href="#sil" transform="translate(0 -6)" stroke="#ffffff" fill="#ffffff"/><use href="#sil" transform="translate(0 6)" stroke="#ffffff" fill="#ffffff"/><use href="#sil" transform="translate(-6 0)" stroke="#ffffff" fill="#ffffff"/><use href="#sil" transform="translate(6 0)" stroke="#ffffff" fill="#ffffff"/><g fill="none" stroke-linejoin="round"><path d="M1251.0 1145.0L1251.2 1154.2L1251.8 1163.5L1252.8 1172.9L1254.3 1182.4L1256.1 1192.1L1258.3 1201.8L1261.0 1211.6L1264.0 1221.4L1267.5 1231.3L1271.3 1241.2L1275.5 1251.2L1280.1 1261.2L1285.1 1271.2L1290.4 1281.1L1296.1 1291.1L1302.2 1301.0L1308.6 1310.9L1315.3 1320.8L1322.4 1330.6L1329.8 1340.3L1337.6 1349.9L1345.6 1359.4L1354.0 1368.9L1362.6 1378.2L1371.6 1387.3L1380.8 1396.4L1390.2 1405.3L1399.9 1414.0L1409.9 1422.6L1420.1 1430.9L1430.5 1439.1L1441.1 1447.1L1451.9 1454.9L1462.8 1462.5L1474.0 1469.9L1485.3 1477.0L1496.7 1483.9L1508.3 1490.5L1520.0 1496.9L1531.8 1503.0L1543.6 1508.8L1555.6 1514.4L1567.6 1519.7L1579.7 1524.7L1591.8 1529.4L1603.9 1533.8L1616.0 1537.9M2355.0 1506.0L2354.8 1515.4L2354.2 1524.7L2353.2 1533.7L2351.9 1542.6L2350.1 1551.3L2347.9 1559.7L2345.4 1568.0L2342.5 1576.0L2339.2 1583.8L2335.5 1591.3L2331.4 1598.6L2327.0 1605.7L2322.2 1612.4L2317.0 1619.0L2311.5 1625.2L2305.7 1631.2L2299.4 1636.8L2292.9 1642.2L2286.0 1647.3L2278.8 1652.1L2271.2 1656.6L2263.3 1660.8L2255.2 1664.6L2246.7 1668.2L2237.9 1671.4L2228.9 1674.3L2219.6 1676.9L2210.0 1679.2L2200.1 1681.1L2190.0 1682.7L2179.7 1684.0L2169.1 1684.9L2158.3 1685.5L2147.3 1685.8L2136.1 1685.7L2124.7 1685.3L2113.1 1684.6L2101.4 1683.5L2089.5 1682.1L2077.5 1680.4L2065.3 1678.3L2053.0 1675.9L2040.6 1673.2L2028.0 1670.2L2015.4 1666.8L2002.7 1663.1L1990.0 1659.1" stroke="#a9a6f4" stroke-width="106"/><path d="M1251.0 1145.0L1251.2 1154.2L1251.8 1163.5L1252.8 1172.9L1254.3 1182.4L1256.1 1192.1L1258.3 1201.8L1261.0 1211.6L1264.0 1221.4L1267.5 1231.3L1271.3 1241.2L1275.5 1251.2L1280.1 1261.2L1285.1 1271.2L1290.4 1281.1L1296.1 1291.1L1302.2 1301.0L1308.6 1310.9L1315.3 1320.8L1322.4 1330.6L1329.8 1340.3L1337.6 1349.9L1345.6 1359.4L1354.0 1368.9L1362.6 1378.2L1371.6 1387.3L1380.8 1396.4L1390.2 1405.3L1399.9 1414.0L1409.9 1422.6L1420.1 1430.9L1430.5 1439.1L1441.1 1447.1L1451.9 1454.9L1462.8 1462.5L1474.0 1469.9L1485.3 1477.0L1496.7 1483.9L1508.3 1490.5L1520.0 1496.9L1531.8 1503.0L1543.6 1508.8L1555.6 1514.4L1567.6 1519.7L1579.7 1524.7L1591.8 1529.4L1603.9 1533.8L1616.0 1537.9M2355.0 1506.0L2354.8 1515.4L2354.2 1524.7L2353.2 1533.7L2351.9 1542.6L2350.1 1551.3L2347.9 1559.7L2345.4 1568.0L2342.5 1576.0L2339.2 1583.8L2335.5 1591.3L2331.4 1598.6L2327.0 1605.7L2322.2 1612.4L2317.0 1619.0L2311.5 1625.2L2305.7 1631.2L2299.4 1636.8L2292.9 1642.2L2286.0 1647.3L2278.8 1652.1L2271.2 1656.6L2263.3 1660.8L2255.2 1664.6L2246.7 1668.2L2237.9 1671.4L2228.9 1674.3L2219.6 1676.9L2210.0 1679.2L2200.1 1681.1L2190.0 1682.7L2179.7 1684.0L2169.1 1684.9L2158.3 1685.5L2147.3 1685.8L2136.1 1685.7L2124.7 1685.3L2113.1 1684.6L2101.4 1683.5L2089.5 1682.1L2077.5 1680.4L2065.3 1678.3L2053.0 1675.9L2040.6 1673.2L2028.0 1670.2L2015.4 1666.8L2002.7 1663.1L1990.0 1659.1" stroke="#b4b2f6" stroke-width="102"/><path d="M1251.0 1145.0L1251.2 1154.2L1251.8 1163.5L1252.8 1172.9L1254.3 1182.4L1256.1 1192.1L1258.3 1201.8L1261.0 1211.6L1264.0 1221.4L1267.5 1231.3L1271.3 1241.2L1275.5 1251.2L1280.1 1261.2L1285.1 1271.2L1290.4 1281.1L1296.1 1291.1L1302.2 1301.0L1308.6 1310.9L1315.3 1320.8L1322.4 1330.6L1329.8 1340.3L1337.6 1349.9L1345.6 1359.4L1354.0 1368.9L1362.6 1378.2L1371.6 1387.3L1380.8 1396.4L1390.2 1405.3L1399.9 1414.0L1409.9 1422.6L1420.1 1430.9L1430.5 1439.1L1441.1 1447.1L1451.9 1454.9L1462.8 1462.5L1474.0 1469.9L1485.3 1477.0L1496.7 1483.9L1508.3 1490.5L1520.0 1496.9L1531.8 1503.0L1543.6 1508.8L1555.6 1514.4L1567.6 1519.7L1579.7 1524.7L1591.8 1529.4L1603.9 1533.8L1616.0 1537.9M2355.0 1506.0L2354.8 1515.4L2354.2 1524.7L2353.2 1533.7L2351.9 1542.6L2350.1 1551.3L2347.9 1559.7L2345.4 1568.0L2342.5 1576.0L2339.2 1583.8L2335.5 1591.3L2331.4 1598.6L2327.0 1605.7L2322.2 1612.4L2317.0 1619.0L2311.5 1625.2L2305.7 1631.2L2299.4 1636.8L2292.9 1642.2L2286.0 1647.3L2278.8 1652.1L2271.2 1656.6L2263.3 1660.8L2255.2 1664.6L2246.7 1668.2L2237.9 1671.4L2228.9 1674.3L2219.6 1676.9L2210.0 1679.2L2200.1 1681.1L2190.0 1682.7L2179.7 1684.0L2169.1 1684.9L2158.3 1685.5L2147.3 1685.8L2136.1 1685.7L2124.7 1685.3L2113.1 1684.6L2101.4 1683.5L2089.5 1682.1L2077.5 1680.4L2065.3 1678.3L2053.0 1675.9L2040.6 1673.2L2028.0 1670.2L2015.4 1666.8L2002.7 1663.1L1990.0 1659.1" stroke="#bebcf7" stroke-width="97"/><path d="M1251.0 1145.0L1251.2 1154.2L1251.8 1163.5L1252.8 1172.9L1254.3 1182.4L1256.1 1192.1L1258.3 1201.8L1261.0 1211.6L1264.0 1221.4L1267.5 1231.3L1271.3 1241.2L1275.5 1251.2L1280.1 1261.2L1285.1 1271.2L1290.4 1281.1L1296.1 1291.1L1302.2 1301.0L1308.6 1310.9L1315.3 1320.8L1322.4 1330.6L1329.8 1340.3L1337.6 1349.9L1345.6 1359.4L1354.0 1368.9L1362.6 1378.2L1371.6 1387.3L1380.8 1396.4L1390.2 1405.3L1399.9 1414.0L1409.9 1422.6L1420.1 1430.9L1430.5 1439.1L1441.1 1447.1L1451.9 1454.9L1462.8 1462.5L1474.0 1469.9L1485.3 1477.0L1496.7 1483.9L1508.3 1490.5L1520.0 1496.9L1531.8 1503.0L1543.6 1508.8L1555.6 1514.4L1567.6 1519.7L1579.7 1524.7L1591.8 1529.4L1603.9 1533.8L1616.0 1537.9M2355.0 1506.0L2354.8 1515.4L2354.2 1524.7L2353.2 1533.7L2351.9 1542.6L2350.1 1551.3L2347.9 1559.7L2345.4 1568.0L2342.5 1576.0L2339.2 1583.8L2335.5 1591.3L2331.4 1598.6L2327.0 1605.7L2322.2 1612.4L2317.0 1619.0L2311.5 1625.2L2305.7 1631.2L2299.4 1636.8L2292.9 1642.2L2286.0 1647.3L2278.8 1652.1L2271.2 1656.6L2263.3 1660.8L2255.2 1664.6L2246.7 1668.2L2237.9 1671.4L2228.9 1674.3L2219.6 1676.9L2210.0 1679.2L2200.1 1681.1L2190.0 1682.7L2179.7 1684.0L2169.1 1684.9L2158.3 1685.5L2147.3 1685.8L2136.1 1685.7L2124.7 1685.3L2113.1 1684.6L2101.4 1683.5L2089.5 1682.1L2077.5 1680.4L2065.3 1678.3L2053.0 1675.9L2040.6 1673.2L2028.0 1670.2L2015.4 1666.8L2002.7 1663.1L1990.0 1659.1" stroke="#c6c5f8" stroke-width="91"/><path d="M1251.0 1145.0L1251.2 1154.2L1251.8 1163.5L1252.8 1172.9L1254.3 1182.4L1256.1 1192.1L1258.3 1201.8L1261.0 1211.6L1264.0 1221.4L1267.5 1231.3L1271.3 1241.2L1275.5 1251.2L1280.1 1261.2L1285.1 1271.2L1290.4 1281.1L1296.1 1291.1L1302.2 1301.0L1308.6 1310.9L1315.3 1320.8L1322.4 1330.6L1329.8 1340.3L1337.6 1349.9L1345.6 1359.4L1354.0 1368.9L1362.6 1378.2L1371.6 1387.3L1380.8 1396.4L1390.2 1405.3L1399.9 1414.0L1409.9 1422.6L1420.1 1430.9L1430.5 1439.1L1441.1 1447.1L1451.9 1454.9L1462.8 1462.5L1474.0 1469.9L1485.3 1477.0L1496.7 1483.9L1508.3 1490.5L1520.0 1496.9L1531.8 1503.0L1543.6 1508.8L1555.6 1514.4L1567.6 1519.7L1579.7 1524.7L1591.8 1529.4L1603.9 1533.8L1616.0 1537.9M2355.0 1506.0L2354.8 1515.4L2354.2 1524.7L2353.2 1533.7L2351.9 1542.6L2350.1 1551.3L2347.9 1559.7L2345.4 1568.0L2342.5 1576.0L2339.2 1583.8L2335.5 1591.3L2331.4 1598.6L2327.0 1605.7L2322.2 1612.4L2317.0 1619.0L2311.5 1625.2L2305.7 1631.2L2299.4 1636.8L2292.9 1642.2L2286.0 1647.3L2278.8 1652.1L2271.2 1656.6L2263.3 1660.8L2255.2 1664.6L2246.7 1668.2L2237.9 1671.4L2228.9 1674.3L2219.6 1676.9L2210.0 1679.2L2200.1 1681.1L2190.0 1682.7L2179.7 1684.0L2169.1 1684.9L2158.3 1685.5L2147.3 1685.8L2136.1 1685.7L2124.7 1685.3L2113.1 1684.6L2101.4 1683.5L2089.5 1682.1L2077.5 1680.4L2065.3 1678.3L2053.0 1675.9L2040.6 1673.2L2028.0 1670.2L2015.4 1666.8L2002.7 1663.1L1990.0 1659.1" stroke="#cdcdf9" stroke-width="84"/><path d="M1251.0 1145.0L1251.2 1154.2L1251.8 1163.5L1252.8 1172.9L1254.3 1182.4L1256.1 1192.1L1258.3 1201.8L1261.0 1211.6L1264.0 1221.4L1267.5 1231.3L1271.3 1241.2L1275.5 1251.2L1280.1 1261.2L1285.1 1271.2L1290.4 1281.1L1296.1 1291.1L1302.2 1301.0L1308.6 1310.9L1315.3 1320.8L1322.4 1330.6L1329.8 1340.3L1337.6 1349.9L1345.6 1359.4L1354.0 1368.9L1362.6 1378.2L1371.6 1387.3L1380.8 1396.4L1390.2 1405.3L1399.9 1414.0L1409.9 1422.6L1420.1 1430.9L1430.5 1439.1L1441.1 1447.1L1451.9 1454.9L1462.8 1462.5L1474.0 1469.9L1485.3 1477.0L1496.7 1483.9L1508.3 1490.5L1520.0 1496.9L1531.8 1503.0L1543.6 1508.8L1555.6 1514.4L1567.6 1519.7L1579.7 1524.7L1591.8 1529.4L1603.9 1533.8L1616.0 1537.9M2355.0 1506.0L2354.8 1515.4L2354.2 1524.7L2353.2 1533.7L2351.9 1542.6L2350.1 1551.3L2347.9 1559.7L2345.4 1568.0L2342.5 1576.0L2339.2 1583.8L2335.5 1591.3L2331.4 1598.6L2327.0 1605.7L2322.2 1612.4L2317.0 1619.0L2311.5 1625.2L2305.7 1631.2L2299.4 1636.8L2292.9 1642.2L2286.0 1647.3L2278.8 1652.1L2271.2 1656.6L2263.3 1660.8L2255.2 1664.6L2246.7 1668.2L2237.9 1671.4L2228.9 1674.3L2219.6 1676.9L2210.0 1679.2L2200.1 1681.1L2190.0 1682.7L2179.7 1684.0L2169.1 1684.9L2158.3 1685.5L2147.3 1685.8L2136.1 1685.7L2124.7 1685.3L2113.1 1684.6L2101.4 1683.5L2089.5 1682.1L2077.5 1680.4L2065.3 1678.3L2053.0 1675.9L2040.6 1673.2L2028.0 1670.2L2015.4 1666.8L2002.7 1663.1L1990.0 1659.1" stroke="#d4d4fa" stroke-width="76"/><path d="M1251.0 1145.0L1251.2 1154.2L1251.8 1163.5L1252.8 1172.9L1254.3 1182.4L1256.1 1192.1L1258.3 1201.8L1261.0 1211.6L1264.0 1221.4L1267.5 1231.3L1271.3 1241.2L1275.5 1251.2L1280.1 1261.2L1285.1 1271.2L1290.4 1281.1L1296.1 1291.1L1302.2 1301.0L1308.6 1310.9L1315.3 1320.8L1322.4 1330.6L1329.8 1340.3L1337.6 1349.9L1345.6 1359.4L1354.0 1368.9L1362.6 1378.2L1371.6 1387.3L1380.8 1396.4L1390.2 1405.3L1399.9 1414.0L1409.9 1422.6L1420.1 1430.9L1430.5 1439.1L1441.1 1447.1L1451.9 1454.9L1462.8 1462.5L1474.0 1469.9L1485.3 1477.0L1496.7 1483.9L1508.3 1490.5L1520.0 1496.9L1531.8 1503.0L1543.6 1508.8L1555.6 1514.4L1567.6 1519.7L1579.7 1524.7L1591.8 1529.4L1603.9 1533.8L1616.0 1537.9M2355.0 1506.0L2354.8 1515.4L2354.2 1524.7L2353.2 1533.7L2351.9 1542.6L2350.1 1551.3L2347.9 1559.7L2345.4 1568.0L2342.5 1576.0L2339.2 1583.8L2335.5 1591.3L2331.4 1598.6L2327.0 1605.7L2322.2 1612.4L2317.0 1619.0L2311.5 1625.2L2305.7 1631.2L2299.4 1636.8L2292.9 1642.2L2286.0 1647.3L2278.8 1652.1L2271.2 1656.6L2263.3 1660.8L2255.2 1664.6L2246.7 1668.2L2237.9 1671.4L2228.9 1674.3L2219.6 1676.9L2210.0 1679.2L2200.1 1681.1L2190.0 1682.7L2179.7 1684.0L2169.1 1684.9L2158.3 1685.5L2147.3 1685.8L2136.1 1685.7L2124.7 1685.3L2113.1 1684.6L2101.4 1683.5L2089.5 1682.1L2077.5 1680.4L2065.3 1678.3L2053.0 1675.9L2040.6 1673.2L2028.0 1670.2L2015.4 1666.8L2002.7 1663.1L1990.0 1659.1" stroke="#dadafb" stroke-width="66"/><path d="M1251.0 1145.0L1251.2 1154.2L1251.8 1163.5L1252.8 1172.9L1254.3 1182.4L1256.1 1192.1L1258.3 1201.8L1261.0 1211.6L1264.0 1221.4L1267.5 1231.3L1271.3 1241.2L1275.5 1251.2L1280.1 1261.2L1285.1 1271.2L1290.4 1281.1L1296.1 1291.1L1302.2 1301.0L1308.6 1310.9L1315.3 1320.8L1322.4 1330.6L1329.8 1340.3L1337.6 1349.9L1345.6 1359.4L1354.0 1368.9L1362.6 1378.2L1371.6 1387.3L1380.8 1396.4L1390.2 1405.3L1399.9 1414.0L1409.9 1422.6L1420.1 1430.9L1430.5 1439.1L1441.1 1447.1L1451.9 1454.9L1462.8 1462.5L1474.0 1469.9L1485.3 1477.0L1496.7 1483.9L1508.3 1490.5L1520.0 1496.9L1531.8 1503.0L1543.6 1508.8L1555.6 1514.4L1567.6 1519.7L1579.7 1524.7L1591.8 1529.4L1603.9 1533.8L1616.0 1537.9M2355.0 1506.0L2354.8 1515.4L2354.2 1524.7L2353.2 1533.7L2351.9 1542.6L2350.1 1551.3L2347.9 1559.7L2345.4 1568.0L2342.5 1576.0L2339.2 1583.8L2335.5 1591.3L2331.4 1598.6L2327.0 1605.7L2322.2 1612.4L2317.0 1619.0L2311.5 1625.2L2305.7 1631.2L2299.4 1636.8L2292.9 1642.2L2286.0 1647.3L2278.8 1652.1L2271.2 1656.6L2263.3 1660.8L2255.2 1664.6L2246.7 1668.2L2237.9 1671.4L2228.9 1674.3L2219.6 1676.9L2210.0 1679.2L2200.1 1681.1L2190.0 1682.7L2179.7 1684.0L2169.1 1684.9L2158.3 1685.5L2147.3 1685.8L2136.1 1685.7L2124.7 1685.3L2113.1 1684.6L2101.4 1683.5L2089.5 1682.1L2077.5 1680.4L2065.3 1678.3L2053.0 1675.9L2040.6 1673.2L2028.0 1670.2L2015.4 1666.8L2002.7 1663.1L1990.0 1659.1" stroke="#dfdffb" stroke-width="54"/><path d="M1251.0 1145.0L1251.2 1154.2L1251.8 1163.5L1252.8 1172.9L1254.3 1182.4L1256.1 1192.1L1258.3 1201.8L1261.0 1211.6L1264.0 1221.4L1267.5 1231.3L1271.3 1241.2L1275.5 1251.2L1280.1 1261.2L1285.1 1271.2L1290.4 1281.1L1296.1 1291.1L1302.2 1301.0L1308.6 1310.9L1315.3 1320.8L1322.4 1330.6L1329.8 1340.3L1337.6 1349.9L1345.6 1359.4L1354.0 1368.9L1362.6 1378.2L1371.6 1387.3L1380.8 1396.4L1390.2 1405.3L1399.9 1414.0L1409.9 1422.6L1420.1 1430.9L1430.5 1439.1L1441.1 1447.1L1451.9 1454.9L1462.8 1462.5L1474.0 1469.9L1485.3 1477.0L1496.7 1483.9L1508.3 1490.5L1520.0 1496.9L1531.8 1503.0L1543.6 1508.8L1555.6 1514.4L1567.6 1519.7L1579.7 1524.7L1591.8 1529.4L1603.9 1533.8L1616.0 1537.9M2355.0 1506.0L2354.8 1515.4L2354.2 1524.7L2353.2 1533.7L2351.9 1542.6L2350.1 1551.3L2347.9 1559.7L2345.4 1568.0L2342.5 1576.0L2339.2 1583.8L2335.5 1591.3L2331.4 1598.6L2327.0 1605.7L2322.2 1612.4L2317.0 1619.0L2311.5 1625.2L2305.7 1631.2L2299.4 1636.8L2292.9 1642.2L2286.0 1647.3L2278.8 1652.1L2271.2 1656.6L2263.3 1660.8L2255.2 1664.6L2246.7 1668.2L2237.9 1671.4L2228.9 1674.3L2219.6 1676.9L2210.0 1679.2L2200.1 1681.1L2190.0 1682.7L2179.7 1684.0L2169.1 1684.9L2158.3 1685.5L2147.3 1685.8L2136.1 1685.7L2124.7 1685.3L2113.1 1684.6L2101.4 1683.5L2089.5 1682.1L2077.5 1680.4L2065.3 1678.3L2053.0 1675.9L2040.6 1673.2L2028.0 1670.2L2015.4 1666.8L2002.7 1663.1L1990.0 1659.1" stroke="#e3e3fc" stroke-width="40"/><path d="M1251.0 1145.0L1251.2 1154.2L1251.8 1163.5L1252.8 1172.9L1254.3 1182.4L1256.1 1192.1L1258.3 1201.8L1261.0 1211.6L1264.0 1221.4L1267.5 1231.3L1271.3 1241.2L1275.5 1251.2L1280.1 1261.2L1285.1 1271.2L1290.4 1281.1L1296.1 1291.1L1302.2 1301.0L1308.6 1310.9L1315.3 1320.8L1322.4 1330.6L1329.8 1340.3L1337.6 1349.9L1345.6 1359.4L1354.0 1368.9L1362.6 1378.2L1371.6 1387.3L1380.8 1396.4L1390.2 1405.3L1399.9 1414.0L1409.9 1422.6L1420.1 1430.9L1430.5 1439.1L1441.1 1447.1L1451.9 1454.9L1462.8 1462.5L1474.0 1469.9L1485.3 1477.0L1496.7 1483.9L1508.3 1490.5L1520.0 1496.9L1531.8 1503.0L1543.6 1508.8L1555.6 1514.4L1567.6 1519.7L1579.7 1524.7L1591.8 1529.4L1603.9 1533.8L1616.0 1537.9M2355.0 1506.0L2354.8 1515.4L2354.2 1524.7L2353.2 1533.7L2351.9 1542.6L2350.1 1551.3L2347.9 1559.7L2345.4 1568.0L2342.5 1576.0L2339.2 1583.8L2335.5 1591.3L2331.4 1598.6L2327.0 1605.7L2322.2 1612.4L2317.0 1619.0L2311.5 1625.2L2305.7 1631.2L2299.4 1636.8L2292.9 1642.2L2286.0 1647.3L2278.8 1652.1L2271.2 1656.6L2263.3 1660.8L2255.2 1664.6L2246.7 1668.2L2237.9 1671.4L2228.9 1674.3L2219.6 1676.9L2210.0 1679.2L2200.1 1681.1L2190.0 1682.7L2179.7 1684.0L2169.1 1684.9L2158.3 1685.5L2147.3 1685.8L2136.1 1685.7L2124.7 1685.3L2113.1 1684.6L2101.4 1683.5L2089.5 1682.1L2077.5 1680.4L2065.3 1678.3L2053.0 1675.9L2040.6 1673.2L2028.0 1670.2L2015.4 1666.8L2002.7 1663.1L1990.0 1659.1" stroke="#e6e6fc" stroke-width="24"/><path d="M1251.0 1145.0L1251.2 1154.2L1251.8 1163.5L1252.8 1172.9L1254.3 1182.4L1256.1 1192.1L1258.3 1201.8L1261.0 1211.6L1264.0 1221.4L1267.5 1231.3L1271.3 1241.2L1275.5 1251.2L1280.1 1261.2L1285.1 1271.2L1290.4 1281.1L1296.1 1291.1L1302.2 1301.0L1308.6 1310.9L1315.3 1320.8L1322.4 1330.6L1329.8 1340.3L1337.6 1349.9L1345.6 1359.4L1354.0 1368.9L1362.6 1378.2L1371.6 1387.3L1380.8 1396.4L1390.2 1405.3L1399.9 1414.0L1409.9 1422.6L1420.1 1430.9L1430.5 1439.1L1441.1 1447.1L1451.9 1454.9L1462.8 1462.5L1474.0 1469.9L1485.3 1477.0L1496.7 1483.9L1508.3 1490.5L1520.0 1496.9L1531.8 1503.0L1543.6 1508.8L1555.6 1514.4L1567.6 1519.7L1579.7 1524.7L1591.8 1529.4L1603.9 1533.8L1616.0 1537.9" stroke="url(#gshL)" stroke-width="106"/><path d="M2355.0 1506.0L2354.8 1515.4L2354.2 1524.7L2353.2 1533.7L2351.9 1542.6L2350.1 1551.3L2347.9 1559.7L2345.4 1568.0L2342.5 1576.0L2339.2 1583.8L2335.5 1591.3L2331.4 1598.6L2327.0 1605.7L2322.2 1612.4L2317.0 1619.0L2311.5 1625.2L2305.7 1631.2L2299.4 1636.8L2292.9 1642.2L2286.0 1647.3L2278.8 1652.1L2271.2 1656.6L2263.3 1660.8L2255.2 1664.6L2246.7 1668.2L2237.9 1671.4L2228.9 1674.3L2219.6 1676.9L2210.0 1679.2L2200.1 1681.1L2190.0 1682.7L2179.7 1684.0L2169.1 1684.9L2158.3 1685.5L2147.3 1685.8L2136.1 1685.7L2124.7 1685.3L2113.1 1684.6L2101.4 1683.5L2089.5 1682.1L2077.5 1680.4L2065.3 1678.3L2053.0 1675.9L2040.6 1673.2L2028.0 1670.2L2015.4 1666.8L2002.7 1663.1L1990.0 1659.1" stroke="url(#gshR)" stroke-width="106"/><path d="M1251.0 842.0L1251.0 1145.0" stroke="#9b99f2" stroke-width="106"/><path d="M1251.0 842.0L1251.0 1145.0" stroke="#3434ef" stroke-width="94"/><path d="M1616.0 1537.9L1990.0 1659.1" stroke="#9b99f2" stroke-width="106"/><path d="M1616.0 1537.9L1990.0 1659.1" stroke="#3434ef" stroke-width="94"/><path d="M2355.0 1506.0L2355.0 790.0" stroke="#9b99f2" stroke-width="106"/><path d="M2355.0 1506.0L2355.0 790.0" stroke="#3434ef" stroke-width="94"/></g><path d="M1198.0 842.0A53 38 0 0 1 1304.0 842.0Z" fill="#b9b9f6"/><path d="M1198.0 842.0A53 38 0 0 0 1304.0 842.0Z" fill="#5c5cee"/><rect x="1198.0" y="848.0" width="6" height="30" fill="#9b99f2"/><rect x="1298.0" y="848.0" width="6" height="30" fill="#9b99f2"/><rect x="1198.0" y="841.5" width="6" height="7" fill="#aaaaf4"/><rect x="1298.0" y="841.5" width="6" height="7" fill="#aaaaf4"/><ellipse cx="1251.0" cy="842.0" rx="47" ry="33.5" fill="#9898f0"/><path d="M2302.0 790.0A53 38 0 0 1 2408.0 790.0Z" fill="#b9b9f6"/><path d="M2302.0 790.0A53 38 0 0 0 2408.0 790.0Z" fill="#5c5cee"/><rect x="2302.0" y="796.0" width="6" height="30" fill="#9b99f2"/><rect x="2402.0" y="796.0" width="6" height="30" fill="#9b99f2"/><rect x="2302.0" y="789.5" width="6" height="7" fill="#aaaaf4"/><rect x="2402.0" y="789.5" width="6" height="7" fill="#aaaaf4"/><ellipse cx="2355.0" cy="790.0" rx="47" ry="33.5" fill="#9898f0"/><ellipse cx="1251.0" cy="1145.0" rx="53" ry="37.5" fill="#9a9af6"/><path d="M1198.0 1145.0A53 37.5 0 0 1 1304.0 1145.0Z" fill="#6a6af2"/><ellipse cx="1251.0" cy="1145.0" rx="49" ry="34" fill="#8282f4"/><ellipse cx="2355.0" cy="1506.0" rx="53" ry="37.5" fill="#9a9af6"/><path d="M2302.0 1506.0A53 37.5 0 0 1 2408.0 1506.0Z" fill="#6a6af2"/><ellipse cx="2355.0" cy="1506.0" rx="49" ry="34" fill="#8282f4"/><g transform="translate(1616.0 1537.9) rotate(17.97)"><ellipse cx="0" cy="0" rx="15.5" ry="53" fill="#9a9af6"/><path d="M0 -53A15.500 53 0 0 1 0 53Z" fill="#6a6af2"/><ellipse cx="0" cy="0" rx="13.5" ry="49" fill="#8282f4"/></g><g transform="translate(1990.0 1659.1) rotate(17.97)"><ellipse cx="0" cy="0" rx="15.5" ry="53" fill="#9a9af6"/><path d="M0 -53A15.500 53 0 0 0 0 53Z" fill="#6a6af2"/><ellipse cx="0" cy="0" rx="13.5" ry="49" fill="#8282f4"/></g><path d="M1251.0 1145.0L1251.2 1154.2L1251.8 1163.5L1252.8 1172.9L1254.3 1182.4L1256.1 1192.1L1258.3 1201.8L1261.0 1211.6L1264.0 1221.4L1267.5 1231.3L1271.3 1241.2L1275.5 1251.2L1280.1 1261.2L1285.1 1271.2L1290.4 1281.1L1296.1 1291.1L1302.2 1301.0L1308.6 1310.9L1315.3 1320.8L1322.4 1330.6L1329.8 1340.3L1337.6 1349.9L1345.6 1359.4L1354.0 1368.9L1362.6 1378.2L1371.6 1387.3L1380.8 1396.4L1390.2 1405.3L1399.9 1414.0L1409.9 1422.6L1420.1 1430.9L1430.5 1439.1L1441.1 1447.1L1451.9 1454.9L1462.8 1462.5L1474.0 1469.9L1485.3 1477.0L1496.7 1483.9L1508.3 1490.5L1520.0 1496.9L1531.8 1503.0L1543.6 1508.8L1555.6 1514.4L1567.6 1519.7L1579.7 1524.7L1591.8 1529.4L1603.9 1533.8L1616.0 1537.9M2355.0 1506.0L2354.8 1515.4L2354.2 1524.7L2353.2 1533.7L2351.9 1542.6L2350.1 1551.3L2347.9 1559.7L2345.4 1568.0L2342.5 1576.0L2339.2 1583.8L2335.5 1591.3L2331.4 1598.6L2327.0 1605.7L2322.2 1612.4L2317.0 1619.0L2311.5 1625.2L2305.7 1631.2L2299.4 1636.8L2292.9 1642.2L2286.0 1647.3L2278.8 1652.1L2271.2 1656.6L2263.3 1660.8L2255.2 1664.6L2246.7 1668.2L2237.9 1671.4L2228.9 1674.3L2219.6 1676.9L2210.0 1679.2L2200.1 1681.1L2190.0 1682.7L2179.7 1684.0L2169.1 1684.9L2158.3 1685.5L2147.3 1685.8L2136.1 1685.7L2124.7 1685.3L2113.1 1684.6L2101.4 1683.5L2089.5 1682.1L2077.5 1680.4L2065.3 1678.3L2053.0 1675.9L2040.6 1673.2L2028.0 1670.2L2015.4 1666.8L2002.7 1663.1L1990.0 1659.1" fill="none" stroke="#2c2cf0" stroke-width="1.3"/><path d="M1251.0 850.0L1251.0 1145.0M1605.6 1534.5L1993.8 1660.4M2355.0 1506.0L2355.0 790.0" fill="none" stroke="#050514" stroke-width="1.6"/><rect x="1242" y="834" width="16" height="16" fill="#5bc5c5"/><rect x="1250" y="841" width="2" height="2" fill="#000"/><path d="M2892.6 264.8L2841.0 247.2" stroke="#a9a9e6" stroke-width="2.2"/><path d="M2892.6 264.8L2921.0 222.7" stroke="#f2b6b6" stroke-width="2.2"/><path d="M2892.600 264.800L2891.300 287" stroke="#a4e296" stroke-width="2.2"/><g fill="none" stroke-width="2"><circle cx="2841" cy="247.2" r="20" stroke="#a9a9e6" fill="#f3f3f3"/><path d="M2833 239L2849 255M2849 239L2833 255" stroke="#a9a9e6"/><circle cx="2921" cy="222.7" r="20" stroke="#f2b6b6" fill="#f3f3f3"/><path d="M2911 215H2926L2911 231H2924" stroke="#f2b6b6"/></g><path d="M2892.6 264.8L2943.0 280.8" stroke="#74a0f0" stroke-width="2.4"/><path d="M2892.6 264.8L2867.0 305.0" stroke="#e85252" stroke-width="2.4"/><path d="M2892.6 264.8L2890.9 221.0" stroke="#6cd85c" stroke-width="2.8"/><circle cx="2943" cy="280.8" r="21" fill="#74a0f0"/><path d="M2934.500 272L2951.500 289.500M2951.500 272L2934.500 289.500" stroke="#fff" stroke-width="2.2" fill="none"/><circle cx="2867" cy="305" r="20.3" fill="#e86464" stroke="#e93425" stroke-width="1.6"/><path d="M2858 297H2874L2858.500 313.500H2874" stroke="#fff" stroke-width="2.4" fill="none"/><circle cx="2890.9" cy="221" r="20.3" fill="#7dd96e" stroke="#62d052" stroke-width="1.6"/><path d="M2882.500 214L2890.900 222.500L2899.300 214M2890.900 222.500V231" stroke="#fff" stroke-width="2.4" fill="none"/><circle cx="2891.2" cy="307" r="20" fill="none" stroke="#a4e296" stroke-width="2"/><path d="M2883 299L2891 308L2899 299M2891 308V318" stroke="#a4e296" stroke-width="1.8" fill="none"/></svg>
<div style="left:3006.5px;top:119.5px;width:449.5px;height:1984.5px;background:#e9e9e9;border-left:1.8px solid #9c9c9c"></div>
<div style="left:3008px;top:154px;width:448px;height:857.5px;background:#fff"></div>
<div style="left:3008px;top:1067px;width:448px;height:43px;background:#fff"></div>
<div style="left:3008px;top:1165px;width:448px;height:939px;background:#dfdfdf"></div>
<div class="phdr" style="top:119.5px"></div><span class="t" style="left:3011.6px;top:127.0px;font-size:22px;color:#fff;letter-spacing:0.120px;">Objects</span>
<div class="phdr" style="top:1032.5px"></div><span class="t" style="left:3012.0px;top:1039.3px;font-size:22px;color:#fff;letter-spacing:-0.287px;">Selection</span>
<div class="phdr" style="top:1130px"></div><span class="t" style="left:3012.0px;top:1137.0px;font-size:22px;color:#fff;letter-spacing:0.026px;">Properties</span>
<div style="left:3222.2px;top:1019.7px;width:4.6px;height:4.6px;border-radius:3px;background:#a8a8a8"></div><div style="left:3229.2px;top:1019.7px;width:4.6px;height:4.6px;border-radius:3px;background:#a8a8a8"></div><div style="left:3236.2px;top:1019.7px;width:4.6px;height:4.6px;border-radius:3px;background:#a8a8a8"></div>
<div style="left:3222.2px;top:1117.2px;width:4.6px;height:4.6px;border-radius:3px;background:#a8a8a8"></div><div style="left:3229.2px;top:1117.2px;width:4.6px;height:4.6px;border-radius:3px;background:#a8a8a8"></div><div style="left:3236.2px;top:1117.2px;width:4.6px;height:4.6px;border-radius:3px;background:#a8a8a8"></div>
<svg style="left:2988px;top:120px;width:18px;height:50px" viewBox="2988 120 18 50"><path d="M3004 123V143L2991 133Z" fill="#bdbdbd"/><path d="M2991 146V167.500L3004 156.500Z" fill="#bdbdbd"/></svg>
<div style="left:2990px;top:1105px;width:12px;height:12px;border-radius:6px;background:#c6c6c6"></div>
<svg style="left:3040px;top:158px;width:400px;height:32px" viewBox="3040 158 400 32"><path d="M3049 165H3059L3061.500 168H3075.500V183.500H3049Z" fill="#62b0fa" stroke="#000" stroke-width="1.6" stroke-linejoin="round"/><path d="M3109 165H3124V170H3133.500V183H3118V178H3109Z" fill="#5c9cf0" stroke="#000" stroke-width="1.6"/><rect x="3176" y="169.500" width="15" height="13.500" fill="#fff" stroke="#b4b4b4" stroke-width="1.6"/><rect x="3166.500" y="165" width="15" height="13.500" fill="#5c9cf0" stroke="#000" stroke-width="1.6"/><rect x="3225" y="165" width="14.500" height="13.500" fill="#fff" stroke="#b4b4b4" stroke-width="1.6"/><rect x="3235" y="169.500" width="14.500" height="13.500" fill="#fff" stroke="#b4b4b4" stroke-width="1.6"/><rect x="3235" y="169.500" width="4.500" height="9" fill="#5c9cf0" stroke="#000" stroke-width="1.6"/><path d="M3283 170Q3297 160 3311 170V182Q3297 172 3283 182Z" fill="#a7afc0" stroke="#111" stroke-width="1.6" stroke-linejoin="round"/><path d="M3283 176Q3297 166 3311 176" fill="none" stroke="#1c2ce0" stroke-width="1.6"/><circle cx="3356.500" cy="174" r="6.500" fill="#5c7cf8"/><path d="M3347.500 166.500Q3342.500 174 3347.500 181.500M3365.500 166.500Q3370.500 174 3365.500 181.500" fill="none" stroke="#111" stroke-width="2"/><path d="M3345.500 165.500L3349.500 165L3348.500 169M3367.500 182.500L3363.500 183L3364.500 179" fill="none" stroke="#111" stroke-width="1.4"/><rect x="3403" y="165" width="24.500" height="18" fill="#fff" stroke="#111" stroke-width="1.8"/><rect x="3407.500" y="169" width="15.500" height="10" fill="#fff" stroke="#4c6cf8" stroke-width="1.8"/><path d="M3415.200 166V171M3415.200 177V182M3404.500 174H3409.500M3421 174H3426" stroke="#46c43c" stroke-width="2"/></svg>
<svg style="left:3028.0px;top:196.2px;width:20px;height:20px" viewBox="-10 -10 20 20"><path d="M-3 -7.200H3L7.200 -3V3L3 7.200H-3L-7.200 3V-3Z" fill="#fff" stroke="#111" stroke-width="1.5" stroke-dasharray="0"/><rect x="-2.100" y="-2.100" width="4.200" height="4.200" fill="#111"/></svg>
<span class="t" style="left:3052.0px;top:195.2px;font-size:21px;color:#444;letter-spacing:0.208px;">Camera 1</span>
<svg style="left:3028.0px;top:230.4px;width:20px;height:20px" viewBox="-10 -10 20 20"><path d="M-3 -7.200H3L7.200 -3V3L3 7.200H-3L-7.200 3V-3Z" fill="#fff" stroke="#111" stroke-width="1.5" stroke-dasharray="0"/><rect x="-2.100" y="-2.100" width="4.200" height="4.200" fill="#111"/></svg>
<span class="t" style="left:3052.0px;top:229.4px;font-size:21px;color:#444;letter-spacing:-0.055px;">Light 1</span>
<svg style="left:3028.0px;top:264.7px;width:20px;height:20px" viewBox="-10 -10 20 20"><path d="M-3 -7.200H3L7.200 -3V3L3 7.200H-3L-7.200 3V-3Z" fill="#fff" stroke="#5a5a5a" stroke-width="1.5" stroke-dasharray="1.6 1"/><rect x="-2.100" y="-2.100" width="4.200" height="4.200" fill="#e2e2e2"/></svg>
<span class="t" style="left:3052.0px;top:263.7px;font-size:21px;color:#444;letter-spacing:0.929px;">MeshTube_1-Mesh</span>
<div style="left:3050px;top:294.2px;width:406px;height:27.6px;background:#464646;border-radius:3px 0 0 3px"></div>
<svg style="left:3028.0px;top:298.3px;width:20px;height:20px" viewBox="-10 -10 20 20"><path d="M-3 -7.200H3L7.200 -3V3L3 7.200H-3L-7.200 3V-3Z" fill="#fff" stroke="#111" stroke-width="1.5" stroke-dasharray="0"/><rect x="-2.100" y="-2.100" width="4.200" height="4.200" fill="#111"/></svg>
<span class="t" style="left:3052.0px;top:297.3px;font-size:21px;color:#fff;letter-spacing:0.771px;">MeshTube_1-Mesh-Arc Tube1344</span>
<span class="t" style="left:3201.9px;top:1174.0px;font-size:21px;color:#111;letter-spacing:0.561px;">Name</span>
<div class="field" style="left:3012.7px;top:1206.7px;width:439.0px;height:38.8px;border-width:2px"></div><span class="t" style="left:3026.1px;top:1215.9px;font-size:21px;color:#111;letter-spacing:0.785px;">MeshTube_1-Mesh-Arc Tube1344</span>
<span class="t" style="left:3194.1px;top:1257.8px;font-size:21px;color:#111;letter-spacing:0.157px;">Position</span>
<span class="t" style="left:3179.4px;top:1350.2px;font-size:21px;color:#111;letter-spacing:0.177px;">Orientation</span>
<span class="t" style="left:3011.4px;top:1303.6px;font-size:21px;color:#111;letter-spacing:0.252px;">X</span>
<div class="field" style="left:3030.4px;top:1294.4px;width:118.9px;height:38.8px;border-width:2px"></div><span class="t" style="left:3043.8px;top:1303.6px;font-size:21px;color:#111;letter-spacing:0.457px;">0.0</span>
<span class="t" style="left:3159.4px;top:1303.6px;font-size:21px;color:#111;letter-spacing:1.252px;">Y</span>
<div class="field" style="left:3178.3px;top:1294.4px;width:121.3px;height:38.8px;border-width:2px"></div><span class="t" style="left:3191.7px;top:1303.6px;font-size:21px;color:#111;letter-spacing:0.523px;">0.0</span>
<span class="t" style="left:3309.3px;top:1303.6px;font-size:21px;color:#111;letter-spacing:1.534px;">Z</span>
<div class="field" style="left:3328.5px;top:1294.4px;width:119.1px;height:38.8px;border-width:2px"></div><span class="t" style="left:3341.9px;top:1303.6px;font-size:21px;color:#111;letter-spacing:0.357px;">0.0</span>
<span class="t" style="left:3011.4px;top:1395.8px;font-size:21px;color:#111;letter-spacing:0.252px;">X</span>
<div class="field" style="left:3030.4px;top:1386.8px;width:118.9px;height:38.4px;border-width:2px"></div><span class="t" style="left:3043.8px;top:1395.8px;font-size:21px;color:#111;letter-spacing:0.457px;">0.0</span>
<span class="t" style="left:3159.4px;top:1395.8px;font-size:21px;color:#111;letter-spacing:1.252px;">Y</span>
<div class="field" style="left:3178.3px;top:1386.8px;width:121.3px;height:38.4px;border-width:2px"></div><span class="t" style="left:3191.7px;top:1395.8px;font-size:21px;color:#111;letter-spacing:0.523px;">0.0</span>
<span class="t" style="left:3309.3px;top:1395.8px;font-size:21px;color:#111;letter-spacing:1.534px;">Z</span>
<div class="field" style="left:3328.5px;top:1386.8px;width:119.1px;height:38.4px;border-width:2px"></div><span class="t" style="left:3341.9px;top:1395.8px;font-size:21px;color:#111;letter-spacing:0.357px;">0.0</span>
<span class="t" style="left:3193.9px;top:1442.0px;font-size:21px;color:#111;letter-spacing:0.657px;">Texture</span>
<div class="combo" style="left:3013px;top:1476px;width:438px;height:37.5px"></div>
<span class="t" style="left:3026.4px;top:1484.1px;font-size:21px;color:#222;letter-spacing:0.407px;">Default Texture</span>
<svg style="left:3422px;top:1487px;width:24px;height:16px" viewBox="0 0 24 16"><path d="M3 3L12 12L21 3" fill="none" stroke="#3c3c3c" stroke-width="2"/></svg>
<span class="t" style="left:3069.4px;top:1540.0px;font-size:21px;color:#111;letter-spacing:0.911px;">Bend Radius</span>
<div class="field" style="left:3222.5px;top:1531.0px;width:117.0px;height:39.0px;border-width:2px"></div><span class="t" style="left:3235.8px;top:1540.3px;font-size:21px;color:#111;letter-spacing:0.465px;">6.40749</span>
<svg style="left:3345px;top:1528px;width:44px;height:44px" viewBox="3345 1528 44 44"><circle cx="3367.7" cy="1550.5" r="19.2" fill="#4f4f4f" stroke="#3a3a3a" stroke-width="2"/><rect x="3369.5" y="1554.1" width="6.4" height="2.6" fill="#161616"/><rect x="3369.5" y="1557.1" width="6.4" height="2.8" fill="#cfcfcf"/></svg>
<span class="t" style="left:3061.4px;top:1607.5px;font-size:21px;color:#111;letter-spacing:0.505px;">Tube Diameter</span>
<div class="field" style="left:3228.0px;top:1598.5px;width:117.0px;height:39.0px;border-width:2px"></div><span class="t" style="left:3242.1px;top:1607.8px;font-size:21px;color:#111;letter-spacing:0.123px;">1.75</span>
<svg style="left:3351px;top:1596px;width:44px;height:44px" viewBox="3351 1596 44 44"><circle cx="3373.0" cy="1618.0" r="19.2" fill="#4f4f4f" stroke="#3a3a3a" stroke-width="2"/><rect x="3370.8" y="1622.6" width="6.4" height="2.6" fill="#161616"/><rect x="3370.8" y="1625.6" width="6.4" height="2.8" fill="#cfcfcf"/></svg>
<span class="t" style="left:3085.4px;top:1675.5px;font-size:21px;color:#111;letter-spacing:0.477px;">Tube Wall</span>
<div class="field" style="left:3204.0px;top:1666.5px;width:118.0px;height:39.0px;border-width:2px"></div><span class="t" style="left:3217.4px;top:1675.8px;font-size:21px;color:#111;letter-spacing:0.403px;">0.095</span>
<svg style="left:3328px;top:1664px;width:44px;height:44px" viewBox="3328 1664 44 44"><circle cx="3350.0" cy="1686.0" r="19.2" fill="#4f4f4f" stroke="#3a3a3a" stroke-width="2"/><rect x="3338.8" y="1683.6" width="6.4" height="2.6" fill="#161616"/><rect x="3338.8" y="1686.6" width="6.4" height="2.8" fill="#cfcfcf"/></svg>
<span class="t" style="left:3058.0px;top:1743.5px;font-size:21px;color:#111;letter-spacing:0.829px;">Min Bend Span</span>
<div class="field" style="left:3234.5px;top:1734.5px;width:117.0px;height:39.0px;border-width:2px"></div><span class="t" style="left:3247.8px;top:1743.8px;font-size:21px;color:#111;letter-spacing:0.390px;">0.0</span>
<svg style="left:3357px;top:1732px;width:44px;height:44px" viewBox="3357 1732 44 44"><circle cx="3379.7" cy="1754.0" r="19.2" fill="#4f4f4f" stroke="#3a3a3a" stroke-width="2"/><rect x="3376.5" y="1741.6" width="6.4" height="2.6" fill="#161616"/><rect x="3376.5" y="1744.6" width="6.4" height="2.8" fill="#cfcfcf"/></svg>
<div style="left:197px;top:2046px;width:2809px;height:55px;background:linear-gradient(180deg,#e7e7e7,#dadada)"></div>
<svg style="left:0;top:0;width:0;height:0"><defs><linearGradient id="gbb" x1="0" y1="0" x2="0" y2="1"><stop offset="0" stop-color="#fbfbfb"/><stop offset="1" stop-color="#e8e8e8"/></linearGradient></defs></svg>
<svg style="left:1000px;top:2048px;width:52px;height:52px" viewBox="0 0 52 52"><g transform="translate(1.70 2.00)"><rect x="1" y="1" width="45.6" height="45.6" rx="6" fill="url(#gbb)" stroke="#444" stroke-width="2"/><g transform="scale(0.9917)"><path d="M8 7H34L40 13V29M8 7V15H11V23H8V29H10" fill="none" stroke="#222" stroke-width="1.6"/><rect x="14.0" y="12.5" width="4.600" height="4.200" fill="#555"/><rect x="18.6" y="12.5" width="4.600" height="4.200" fill="#cfcfcf"/><rect x="23.2" y="12.5" width="4.600" height="4.200" fill="#555"/><rect x="27.8" y="12.5" width="4.600" height="4.200" fill="#cfcfcf"/><rect x="32.4" y="12.5" width="4.600" height="4.200" fill="#555"/><rect x="14.0" y="16.7" width="4.600" height="4.200" fill="#cfcfcf"/><rect x="18.6" y="16.7" width="4.600" height="4.200" fill="#555"/><rect x="23.2" y="16.7" width="4.600" height="4.200" fill="#cfcfcf"/><rect x="27.8" y="16.7" width="4.600" height="4.200" fill="#555"/><rect x="32.4" y="16.7" width="4.600" height="4.200" fill="#cfcfcf"/><rect x="14.0" y="20.9" width="4.600" height="4.200" fill="#555"/><rect x="18.6" y="20.9" width="4.600" height="4.200" fill="#cfcfcf"/><rect x="23.2" y="20.9" width="4.600" height="4.200" fill="#555"/><rect x="27.8" y="20.9" width="4.600" height="4.200" fill="#cfcfcf"/><rect x="32.4" y="20.9" width="4.600" height="4.200" fill="#555"/><rect x="14.0" y="25.1" width="4.600" height="4.200" fill="#cfcfcf"/><rect x="18.6" y="25.1" width="4.600" height="4.200" fill="#555"/><rect x="23.2" y="25.1" width="4.600" height="4.200" fill="#cfcfcf"/><rect x="27.8" y="25.1" width="4.600" height="4.200" fill="#555"/><rect x="32.4" y="25.1" width="4.600" height="4.200" fill="#cfcfcf"/><path d="M16 34L24 41L32 34" fill="none" stroke="#222" stroke-width="2.2"/></g></g></svg>
<svg style="left:1061px;top:2048px;width:52px;height:52px" viewBox="0 0 52 52"><g transform="translate(1.47 2.90)"><rect x="1" y="1" width="43.8" height="43.8" rx="6" fill="url(#gbb)" stroke="#444" stroke-width="2"/><g transform="scale(0.9542)"><path d="M5.0 5.0L19.0 19.0M19.0 19.0H8.0M19.0 19.0V8.0" stroke="#222" stroke-width="2.2" fill="none"/><path d="M43.0 5.0L29.0 19.0M29.0 19.0H40.0M29.0 19.0V8.0" stroke="#222" stroke-width="2.2" fill="none"/><path d="M5.0 43.0L19.0 29.0M19.0 29.0H8.0M19.0 29.0V40.0" stroke="#222" stroke-width="2.2" fill="none"/><path d="M43.0 43.0L29.0 29.0M29.0 29.0H40.0M29.0 29.0V40.0" stroke="#222" stroke-width="2.2" fill="none"/><circle cx="24" cy="24" r="2" fill="#4cb944"/></g></g></svg>
<svg style="left:1121px;top:2048px;width:52px;height:52px" viewBox="0 0 52 52"><g transform="translate(1.34 2.90)"><rect x="1" y="1" width="43.8" height="43.8" rx="6" fill="url(#gbb)" stroke="#444" stroke-width="2"/><g transform="scale(0.9542)"><circle cx="13" cy="24" r="4.200" fill="none" stroke="#222" stroke-width="1.6"/><circle cx="13" cy="24" r="1.600" fill="#222"/><rect x="19.500" y="13" width="25.500" height="21" fill="#000"/><text x="21" y="30" font-size="19" fill="#fff" font-family="Liberation Sans">Sh</text></g></g></svg>
<svg style="left:1181px;top:2048px;width:52px;height:52px" viewBox="0 0 52 52"><g transform="translate(1.21 2.90)"><rect x="1" y="1" width="43.8" height="43.8" rx="6" fill="url(#gbb)" stroke="#444" stroke-width="2"/><g transform="scale(0.9542)"><path d="M15 10L24 18L33 10" fill="none" stroke="#222" stroke-width="2.2"/><rect x="7.5" y="20.500" width="8.500" height="19" fill="#e0474c"/><rect x="15.8" y="20.500" width="8.500" height="19" fill="#4caf50"/><rect x="24.1" y="20.500" width="8.500" height="19" fill="#3f7fdc"/><rect x="32.4" y="20.500" width="8.500" height="19" fill="#a85fd6"/></g></g></svg>
<svg style="left:1241px;top:2048px;width:52px;height:52px" viewBox="0 0 52 52"><g transform="translate(1.08 2.90)"><rect x="1" y="1" width="43.8" height="43.8" rx="6" fill="url(#gbb)" stroke="#444" stroke-width="2"/><g transform="scale(0.9542)"><path d="M9 9L40 40" stroke="#222" stroke-width="2"/><path d="M28 9V20H38M20 39V28H9" fill="none" stroke="#222" stroke-width="2.2"/><circle cx="24" cy="24" r="2" fill="#4cb944"/></g></g></svg>
<svg style="left:1300px;top:2048px;width:52px;height:52px" viewBox="0 0 52 52"><g transform="translate(1.05 2.00)"><rect x="1" y="1" width="45.6" height="45.6" rx="6" fill="url(#gbb)" stroke="#444" stroke-width="2"/><g transform="scale(0.9917)"><path d="M30 9H16Q8 9 8 24Q8 39 16 39H30" fill="none" stroke="#7f9fe0" stroke-width="2.8"/><path d="M38 9Q22 9 24 24Q22 39 38 39Q30 32 30 24Q30 16 38 9Z" fill="none" stroke="#3c2cc0" stroke-width="3" stroke-linejoin="round"/></g></g></svg>
<svg style="left:1360px;top:2048px;width:52px;height:52px" viewBox="0 0 52 52"><g transform="translate(1.82 2.90)"><rect x="1" y="1" width="43.8" height="43.8" rx="6" fill="url(#gbb)" stroke="#444" stroke-width="2"/><g transform="scale(0.9542)"><path d="M32 9H16Q8 9 8 24Q8 39 16 39H32" fill="none" stroke="#7f9fe0" stroke-width="2.8"/><ellipse cx="32" cy="24" rx="6" ry="14.500" fill="none" stroke="#3c2cc0" stroke-width="3"/></g></g></svg>
<svg style="left:1420px;top:2048px;width:52px;height:52px" viewBox="0 0 52 52"><g transform="translate(1.69 2.90)"><rect x="1" y="1" width="43.8" height="43.8" rx="6" fill="url(#gbb)" stroke="#444" stroke-width="2"/><g transform="scale(0.9542)"><path d="M8.600 14.500H21Q34.500 14.500 34.500 28V40.400" fill="none" stroke="#7f9fe0" stroke-width="9"/><path d="M10.500 14.500H21Q34.500 14.500 34.500 28V38.500" fill="none" stroke="#f8f8f8" stroke-width="2.6"/><path d="M14.500 10.500L21 14.500L14.500 18.500ZM30.500 36L34.500 30L38.500 36Z" fill="#f08a2c"/><path d="M23.200 9.500V19.500M29.500 27.200H39.500" stroke="#f08a2c" stroke-width="2.6"/></g></g></svg>
<svg style="left:1480px;top:2048px;width:52px;height:52px" viewBox="0 0 52 52"><g transform="translate(1.56 2.90)"><rect x="1" y="1" width="43.8" height="43.8" rx="6" fill="url(#gbb)" stroke="#444" stroke-width="2"/><g transform="scale(0.9542)"><path d="M24 12L14 7L8 17L24 27Z" fill="#f4b4b0" stroke="#e83c50" stroke-width="1.6" stroke-linejoin="round"/><path d="M24 12L34 7L40 17L24 27Z" fill="#f4b4b0" stroke="#e83c50" stroke-width="1.6" stroke-linejoin="round"/><path d="M7 30H18L24 38L30 30H41V40H7Z" fill="#8fdcec" stroke="#2c3ce0" stroke-width="1.6" stroke-linejoin="round"/></g></g></svg>
<svg style="left:1540px;top:2048px;width:52px;height:52px" viewBox="0 0 52 52"><g transform="translate(1.43 2.90)"><rect x="1" y="1" width="43.8" height="43.8" rx="6" fill="url(#gbb)" stroke="#444" stroke-width="2"/><g transform="scale(0.9542)"><path d="M7 15H33L39 20V29L33 34H7Z" fill="#c4c47c" stroke="#222" stroke-width="1.8" stroke-linejoin="round"/><circle cx="33.500" cy="24.500" r="2.400" fill="#fff" stroke="#222" stroke-width="1"/><text x="12" y="31.500" font-size="19" fill="#111" font-family="Liberation Sans">G</text></g></g></svg>
<svg style="left:1600px;top:2048px;width:52px;height:52px" viewBox="0 0 52 52"><g transform="translate(1.30 2.90)"><rect x="1" y="1" width="43.8" height="43.8" rx="6" fill="url(#gbb)" stroke="#444" stroke-width="2"/><g transform="scale(0.9542)"><defs><linearGradient id="gb5" x1="0" y1="0" x2="1" y2="0"><stop offset="0" stop-color="#b9bbd6"/><stop offset="0.6" stop-color="#e2e3f6"/><stop offset="1" stop-color="#c9cbe6"/></linearGradient></defs><path d="M16 10L28.500 8L16.500 31L6 24.500L16.500 20.500Z" fill="none" stroke="#333" stroke-width="1.8"/><g transform="translate(31.500 32.500) rotate(35)"><path d="M-8 -6H7A2.600 6 0 0 1 7 6H-8Z" fill="url(#gb5)" stroke="#444" stroke-width="0.8"/><ellipse cx="-8" cy="0" rx="2.600" ry="6" fill="#b4b6d2" stroke="#444" stroke-width="0.8"/><path d="M-9 -2L-17 -0.500V0.500L-9 2Z" fill="#6a7280" stroke="#333" stroke-width="0.6"/></g></g></g></svg>
<svg style="left:1660px;top:2048px;width:52px;height:52px" viewBox="0 0 52 52"><g transform="translate(1.17 2.90)"><rect x="1" y="1" width="43.8" height="43.8" rx="6" fill="url(#gbb)" stroke="#444" stroke-width="2"/><g transform="scale(0.9542)"><path d="M10 13H20L22.500 16H38V33.500H10Z" fill="#5aa8f4" stroke="#000" stroke-width="1.8" stroke-linejoin="round"/><path d="M11 14H19.500L21.500 16.500H11Z" fill="#fff"/></g></g></svg>
<svg style="left:1719px;top:2048px;width:52px;height:52px" viewBox="0 0 52 52"><g transform="translate(1.14 2.00)"><rect x="1" y="1" width="45.6" height="45.6" rx="6" fill="url(#gbb)" stroke="#444" stroke-width="2"/><g transform="scale(0.9917)"><path d="M24 11V38" stroke="#222" stroke-width="2.2"/><circle cx="24" cy="10.500" r="3" fill="#fff" stroke="#222" stroke-width="1.8"/><circle cx="24" cy="38.500" r="3" fill="#fff" stroke="#222" stroke-width="1.8"/><path d="M33 13L40 21L37 35L29 24Z" fill="none" stroke="#111" stroke-width="2.4" stroke-linejoin="miter"/><path d="M15 13L8 21L11 35L19 24Z" fill="none" stroke="#8a8a8a" stroke-width="2.4"/><path d="M7 10L17 35" stroke="#e8283c" stroke-width="1.6"/></g></g></svg>
<svg style="left:1779px;top:2048px;width:52px;height:52px" viewBox="0 0 52 52"><g transform="translate(1.91 2.90)"><rect x="1" y="1" width="43.8" height="43.8" rx="6" fill="url(#gbb)" stroke="#444" stroke-width="2"/><g transform="scale(0.9542)"><path d="M24 14V28L14 33M24 28L34 31" fill="none" stroke="#444" stroke-width="1.8"/><circle cx="24" cy="12.500" r="7" fill="#52c040"/><circle cx="36" cy="31.500" r="7" fill="#2038e8"/><circle cx="13" cy="36" r="7" fill="#e03020"/><text x="20.200" y="17" font-size="12" font-weight="bold" fill="#fff" font-family="Liberation Sans">Y</text><text x="32" y="36" font-size="12" font-weight="bold" fill="#fff" font-family="Liberation Sans">X</text><text x="9.300" y="40.500" font-size="12" font-weight="bold" fill="#fff" font-family="Liberation Sans">Z</text></g></g></svg>
<svg style="left:1839px;top:2048px;width:52px;height:52px" viewBox="0 0 52 52"><g transform="translate(1.78 2.90)"><rect x="1" y="1" width="43.8" height="43.8" rx="6" fill="url(#gbb)" stroke="#444" stroke-width="2"/><g transform="scale(0.9542)"><path d="M9 10V39M24 10V39M39 10V39M9 11H39M9 24H39M9 38H39" fill="none" stroke="#5a5a5a" stroke-width="3"/><circle cx="9" cy="11" r="2.200" fill="#5a5a5a"/><circle cx="9" cy="38" r="2.200" fill="#5a5a5a"/><circle cx="24" cy="11" r="2.200" fill="#5a5a5a"/><circle cx="24" cy="38" r="2.200" fill="#5a5a5a"/><circle cx="39" cy="11" r="2.200" fill="#5a5a5a"/><circle cx="39" cy="38" r="2.200" fill="#5a5a5a"/></g></g></svg>
<svg style="left:1898px;top:2048px;width:52px;height:52px" viewBox="0 0 52 52"><g transform="translate(1.75 2.00)"><rect x="1" y="1" width="45.6" height="45.6" rx="6" fill="url(#gbb)" stroke="#444" stroke-width="2"/><g transform="scale(0.9917)"><path d="M35.700 28.700A11.600 11.600 0 1 1 32 16.800" fill="none" stroke="#222" stroke-width="2.8"/><path d="M28.600 8.800L33.600 16.800L24.200 20.400" fill="none" stroke="#222" stroke-width="2.8" stroke-linejoin="miter"/></g></g></svg>
<div class="field" style="left:1966px;top:2050px;width:316px;height:47.5px;border:2px solid #bcbcbc;background:linear-gradient(180deg,#fafafa,#ececec)"></div>
<span class="t" style="left:1979.9px;top:2062.8px;font-size:22px;color:#111;letter-spacing:0.120px;">Search</span>
<div style="left:0;top:2101px;width:3456px;height:3px;background:#8c8c8c"></div>
<svg style="left:0px;top:0px;width:22px;height:22px" viewBox="0 0 22 22"><g transform="translate(0 0) scale(1 1)"><path d="M0 0H19 A19 19 0 0 0 0 19Z" fill="#ececec"/><path d="M19 0.700A19 19 0 0 0 0.700 19" fill="none" stroke="#b0b0b0" stroke-width="1.2"/></g></svg>
<svg style="left:3434px;top:0px;width:22px;height:22px" viewBox="0 0 22 22"><g transform="translate(22 0) scale(-1 1)"><path d="M0 0H19 A19 19 0 0 0 0 19Z" fill="#ececec"/><path d="M19 0.700A19 19 0 0 0 0.700 19" fill="none" stroke="#b0b0b0" stroke-width="1.2"/></g></svg>
<svg style="left:0px;top:2082px;width:22px;height:22px" viewBox="0 0 22 22"><g transform="translate(0 22) scale(1 -1)"><path d="M0 0H19 A19 19 0 0 0 0 19Z" fill="#ececec"/><path d="M19 0.700A19 19 0 0 0 0.700 19" fill="none" stroke="#b0b0b0" stroke-width="1.2"/></g></svg>
<svg style="left:3434px;top:2082px;width:22px;height:22px" viewBox="0 0 22 22"><g transform="translate(22 22) scale(-1 -1)"><path d="M0 0H19 A19 19 0 0 0 0 19Z" fill="#ececec"/><path d="M19 0.700A19 19 0 0 0 0.700 19" fill="none" stroke="#b0b0b0" stroke-width="1.2"/></g></svg>

</body></html>
